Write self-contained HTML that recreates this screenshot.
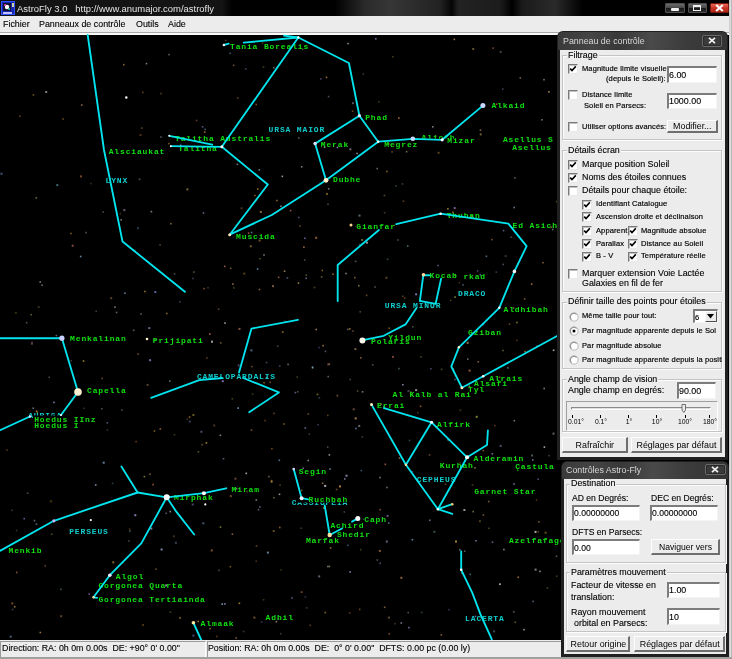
<!DOCTYPE html>
<html><head><meta charset="utf-8"><style>
html,body{margin:0;padding:0;width:732px;height:659px;overflow:hidden;background:#000;}
.t{position:absolute;font-family:"Liberation Sans", sans-serif;line-height:1;white-space:nowrap;will-change:transform;}
.cb{position:absolute;background:#fff;border-top:1px solid #7a7a7a;border-left:1px solid #7a7a7a;border-bottom:1px solid #e8e8e8;border-right:1px solid #e8e8e8;box-shadow:inset 1px 1px 0 #c0c0c0;}
.cb svg{left:-1px!important;top:-1px!important}
</style></head><body>
<div style="position:absolute;left:0.0px;top:0.0px;width:732.0px;height:16.0px;background:linear-gradient(90deg,#131313 0px,#141414 222px,#000 232px,#000 335px,#2a2a2a 365px,#363636 390px,#222 440px,#050505 452px,#222 458px,#1c1c1c 500px,#000 512px,#1a1a1a 522px,#2a2a2a 555px,#000 583px,#000 732px);"></div>
<svg style="position:absolute;left:1px;top:1px" width="14" height="14" viewBox="0 0 14 14"><rect x="0.5" y="0.5" width="13" height="13" fill="#1828b0" stroke="#3050ff"/><rect x="2" y="2" width="8" height="8" fill="#101030"/><circle cx="6" cy="6" r="2.2" fill="#ffffff"/><circle cx="4" cy="4" r="1" fill="#ff40c0"/><circle cx="8" cy="8" r="1" fill="#40e0c0"/><rect x="11" y="2" width="2" height="4" fill="#d0d0a0"/><rect x="2" y="11" width="9" height="2" fill="#c0c0ff"/></svg>
<div class="t" style="left:17.0px;top:3.59px;font-size:9.46px;color:#e4e4e4;">AstroFly 3.0&nbsp;&nbsp; http://www.anumajor.com/astrofly</div>
<div style="position:absolute;left:665.0px;top:2.5px;width:19.5px;height:10.5px;background:linear-gradient(180deg,#6a6a6a 0%,#4a4a4a 45%,#1a1a1a 55%,#2a2a2a 100%);border:1px solid #505050;box-sizing:border-box;border-radius:1px;"></div>
<div style="position:absolute;left:670.8px;top:8.0px;width:8.0px;height:2.5px;background:#f0f0f0;border-radius:1px;"></div>
<div style="position:absolute;left:687.5px;top:2.5px;width:19.5px;height:10.5px;background:linear-gradient(180deg,#6a6a6a 0%,#4a4a4a 45%,#1a1a1a 55%,#2a2a2a 100%);border:1px solid #505050;box-sizing:border-box;border-radius:1px;"></div>
<div style="position:absolute;left:693.2px;top:4.8px;width:8.0px;height:5.8px;border:1.6px solid #f0f0f0;box-sizing:border-box;border-top-width:2.2px;"></div>
<div style="position:absolute;left:709.5px;top:2.5px;width:19.0px;height:10.5px;background:linear-gradient(180deg,#e86a5a 0%,#c83424 50%,#b02818 100%);border:1px solid #7a1a10;box-sizing:border-box;border-radius:1px;"></div>
<svg style="position:absolute;left:714.5px;top:3.8px" width="9" height="8" viewBox="0 0 9 8"><path d="M1.2 1 L7.8 7 M7.8 1 L1.2 7" stroke="#fff" stroke-width="2"/></svg>
<div style="position:absolute;left:0.0px;top:16.0px;width:732.0px;height:17.0px;background:#ececec;"></div>
<div style="position:absolute;left:0.0px;top:32.3px;width:732.0px;height:1.0px;background:#a8a8a8;"></div>
<div style="position:absolute;left:0.0px;top:33.3px;width:732.0px;height:1.7px;background:#fafafa;"></div>
<div class="t" style="left:3.3px;top:19.77px;font-size:8.9px;color:#000;-webkit-text-stroke:0.12px #000;">Fichier</div>
<div class="t" style="left:38.8px;top:19.77px;font-size:8.9px;color:#000;-webkit-text-stroke:0.12px #000;">Panneaux de contrôle</div>
<div class="t" style="left:135.6px;top:19.77px;font-size:8.9px;color:#000;-webkit-text-stroke:0.12px #000;">Outils</div>
<div class="t" style="left:167.8px;top:19.77px;font-size:8.9px;color:#000;-webkit-text-stroke:0.12px #000;">Aide</div>
<svg style="position:absolute;left:0;top:0" width="732" height="659" viewBox="0 0 732 659"><rect x="0" y="35" width="732" height="605" fill="#000"/><g font-family="Liberation Mono" font-size="8" font-weight="bold" letter-spacing="0.85"><rect x="45.2" y="91.0" width="2.0" height="2.0" fill="rgb(249, 249, 249)" opacity="0.50"/><rect x="19.0" y="115.4" width="1.6" height="1.6" fill="rgb(193, 131, 83)" opacity="0.44"/><rect x="81.0" y="104.3" width="1.6" height="1.6" fill="rgb(220, 153, 96)" opacity="0.63"/><rect x="62.3" y="118.2" width="1.6" height="1.6" fill="rgb(174, 137, 70)" opacity="0.57"/><rect x="32.6" y="94.1" width="1.6" height="1.6" fill="rgb(199, 165, 73)" opacity="0.52"/><rect x="145.7" y="62.8" width="1.6" height="1.6" fill="rgb(200, 200, 200)" opacity="0.62"/><rect x="123.0" y="63.9" width="1.6" height="1.6" fill="rgb(183, 150, 61)" opacity="0.68"/><rect x="195.8" y="119.7" width="1.6" height="1.6" fill="rgb(196, 128, 85)" opacity="0.47"/><rect x="142.0" y="91.6" width="1.6" height="1.6" fill="rgb(204, 146, 60)" opacity="0.44"/><rect x="141.0" y="127.3" width="1.6" height="1.6" fill="rgb(182, 125, 58)" opacity="0.51"/><rect x="168.2" y="53.8" width="1.6" height="1.6" fill="rgb(176, 194, 198)" opacity="0.49"/><rect x="139.5" y="134.0" width="2.0" height="2.0" fill="rgb(208, 126, 68)" opacity="0.38"/><rect x="160.2" y="92.7" width="1.6" height="1.6" fill="rgb(188, 138, 83)" opacity="0.42"/><rect x="232.9" y="64.6" width="1.6" height="1.6" fill="rgb(181, 138, 92)" opacity="0.59"/><rect x="236.9" y="97.2" width="1.6" height="1.6" fill="rgb(231, 178, 91)" opacity="0.36"/><rect x="262.7" y="66.1" width="1.6" height="1.6" fill="rgb(201, 171, 67)" opacity="0.37"/><rect x="255.4" y="103.7" width="1.6" height="1.6" fill="rgb(231, 163, 60)" opacity="0.49"/><rect x="203.9" y="131.3" width="1.6" height="1.6" fill="rgb(220, 141, 81)" opacity="0.67"/><rect x="229.3" y="52.5" width="1.6" height="1.6" fill="rgb(134, 153, 204)" opacity="0.52"/><rect x="261.6" y="42.4" width="1.6" height="1.6" fill="rgb(196, 172, 56)" opacity="0.33"/><rect x="224.9" y="39.7" width="1.6" height="1.6" fill="rgb(237, 161, 63)" opacity="0.34"/><rect x="245.0" y="68.1" width="1.6" height="1.6" fill="rgb(163, 182, 250)" opacity="0.36"/><rect x="201.8" y="126.0" width="1.6" height="1.6" fill="rgb(132, 146, 228)" opacity="0.59"/><rect x="273.0" y="66.9" width="1.6" height="1.6" fill="rgb(199, 199, 199)" opacity="0.50"/><rect x="204.4" y="128.6" width="1.6" height="1.6" fill="rgb(138, 195, 248)" opacity="0.45"/><rect x="347.3" y="42.8" width="1.6" height="1.6" fill="rgb(193, 193, 193)" opacity="0.69"/><rect x="362.5" y="73.2" width="1.6" height="1.6" fill="rgb(168, 149, 195)" opacity="0.34"/><rect x="325.7" y="76.6" width="1.6" height="1.6" fill="rgb(228, 153, 84)" opacity="0.68"/><rect x="375.0" y="38.0" width="1.6" height="1.6" fill="rgb(160, 146, 204)" opacity="0.73"/><rect x="378.0" y="101.0" width="1.6" height="1.6" fill="rgb(171, 148, 74)" opacity="0.36"/><rect x="351.8" y="110.4" width="1.6" height="1.6" fill="rgb(226, 156, 70)" opacity="0.45"/><rect x="319.9" y="78.1" width="1.6" height="1.6" fill="rgb(188, 157, 246)" opacity="0.40"/><rect x="392.1" y="56.0" width="1.6" height="1.6" fill="rgb(214, 178, 109)" opacity="0.32"/><rect x="398.0" y="117.2" width="1.6" height="1.6" fill="rgb(230, 142, 68)" opacity="0.67"/><rect x="352.0" y="102.2" width="2.0" height="2.0" fill="rgb(183, 184, 218)" opacity="0.44"/><rect x="327.8" y="95.8" width="1.6" height="1.6" fill="rgb(147, 181, 212)" opacity="0.44"/><rect x="301.9" y="48.6" width="1.6" height="1.6" fill="rgb(173, 174, 108)" opacity="0.42"/><rect x="479.7" y="133.4" width="2.0" height="2.0" fill="rgb(183, 165, 89)" opacity="0.59"/><rect x="495.8" y="103.4" width="1.6" height="1.6" fill="rgb(230, 141, 66)" opacity="0.62"/><rect x="453.5" y="38.6" width="1.6" height="1.6" fill="rgb(214, 159, 99)" opacity="0.73"/><rect x="499.7" y="50.9" width="2.0" height="2.0" fill="rgb(174, 202, 204)" opacity="0.34"/><rect x="472.2" y="48.0" width="2.0" height="2.0" fill="rgb(170, 149, 90)" opacity="0.56"/><rect x="479.7" y="129.4" width="1.6" height="1.6" fill="rgb(196, 131, 101)" opacity="0.69"/><rect x="492.4" y="47.3" width="1.6" height="1.6" fill="rgb(219, 130, 74)" opacity="0.54"/><rect x="432.0" y="126.0" width="1.6" height="1.6" fill="rgb(234, 234, 234)" opacity="0.53"/><rect x="519.5" y="77.1" width="1.6" height="1.6" fill="rgb(173, 138, 106)" opacity="0.69"/><rect x="502.0" y="88.3" width="1.6" height="1.6" fill="rgb(188, 153, 220)" opacity="0.37"/><rect x="541.2" y="119.0" width="1.6" height="1.6" fill="rgb(190, 201, 221)" opacity="0.56"/><rect x="543.2" y="78.9" width="1.6" height="1.6" fill="rgb(183, 191, 225)" opacity="0.59"/><rect x="548.1" y="91.0" width="1.6" height="1.6" fill="rgb(218, 179, 110)" opacity="0.71"/><rect x="85.1" y="231.8" width="1.6" height="1.6" fill="rgb(166, 176, 202)" opacity="0.48"/><rect x="0.5" y="172.7" width="2.0" height="2.0" fill="rgb(132, 178, 248)" opacity="0.48"/><rect x="56.3" y="184.1" width="2.0" height="2.0" fill="rgb(134, 204, 224)" opacity="0.51"/><rect x="80.0" y="175.4" width="2.0" height="2.0" fill="rgb(233, 133, 76)" opacity="0.50"/><rect x="90.1" y="182.7" width="1.6" height="1.6" fill="rgb(194, 151, 94)" opacity="0.31"/><rect x="70.2" y="232.7" width="1.6" height="1.6" fill="rgb(189, 139, 55)" opacity="0.61"/><rect x="35.5" y="197.0" width="1.6" height="1.6" fill="rgb(185, 179, 87)" opacity="0.58"/><rect x="170.1" y="222.9" width="1.6" height="1.6" fill="rgb(222, 177, 88)" opacity="0.58"/><rect x="186.4" y="188.4" width="2.0" height="2.0" fill="rgb(197, 179, 89)" opacity="0.58"/><rect x="123.3" y="209.1" width="2.0" height="2.0" fill="rgb(187, 156, 210)" opacity="0.57"/><rect x="119.5" y="212.8" width="1.6" height="1.6" fill="rgb(182, 133, 70)" opacity="0.36"/><rect x="138.8" y="178.5" width="1.6" height="1.6" fill="rgb(206, 206, 206)" opacity="0.39"/><rect x="179.9" y="144.6" width="1.6" height="1.6" fill="rgb(152, 203, 242)" opacity="0.74"/><rect x="150.6" y="210.8" width="1.6" height="1.6" fill="rgb(173, 198, 202)" opacity="0.66"/><rect x="102.4" y="211.2" width="1.6" height="1.6" fill="rgb(187, 181, 220)" opacity="0.37"/><rect x="120.4" y="219.0" width="1.6" height="1.6" fill="rgb(202, 202, 202)" opacity="0.56"/><rect x="168.1" y="142.8" width="1.6" height="1.6" fill="rgb(220, 154, 82)" opacity="0.53"/><rect x="160.1" y="136.3" width="1.6" height="1.6" fill="rgb(184, 157, 201)" opacity="0.48"/><rect x="137.0" y="227.2" width="2.0" height="2.0" fill="rgb(136, 177, 240)" opacity="0.31"/><rect x="280.2" y="205.5" width="1.6" height="1.6" fill="rgb(241, 241, 241)" opacity="0.56"/><rect x="258.5" y="169.1" width="1.6" height="1.6" fill="rgb(147, 203, 197)" opacity="0.63"/><rect x="281.5" y="175.6" width="1.6" height="1.6" fill="rgb(237, 237, 237)" opacity="0.65"/><rect x="240.6" y="207.3" width="2.0" height="2.0" fill="rgb(213, 144, 85)" opacity="0.35"/><rect x="299.1" y="225.3" width="1.6" height="1.6" fill="rgb(204, 167, 74)" opacity="0.45"/><rect x="257.0" y="188.3" width="1.6" height="1.6" fill="rgb(233, 166, 68)" opacity="0.62"/><rect x="298.0" y="137.3" width="1.6" height="1.6" fill="rgb(177, 160, 206)" opacity="0.50"/><rect x="276.1" y="199.8" width="1.6" height="1.6" fill="rgb(203, 141, 72)" opacity="0.71"/><rect x="250.8" y="231.7" width="1.6" height="1.6" fill="rgb(136, 185, 218)" opacity="0.66"/><rect x="259.8" y="210.9" width="2.0" height="2.0" fill="rgb(190, 149, 85)" opacity="0.74"/><rect x="254.2" y="194.7" width="1.6" height="1.6" fill="rgb(233, 151, 73)" opacity="0.54"/><rect x="236.6" y="163.6" width="1.6" height="1.6" fill="rgb(165, 204, 208)" opacity="0.60"/><rect x="202.7" y="212.2" width="1.6" height="1.6" fill="rgb(170, 155, 216)" opacity="0.64"/><rect x="289.8" y="209.8" width="1.6" height="1.6" fill="rgb(210, 129, 106)" opacity="0.71"/><rect x="247.8" y="232.3" width="1.6" height="1.6" fill="rgb(236, 131, 106)" opacity="0.63"/><rect x="297.9" y="216.7" width="1.6" height="1.6" fill="rgb(137, 148, 229)" opacity="0.49"/><rect x="386.1" y="170.7" width="1.6" height="1.6" fill="rgb(216, 153, 63)" opacity="0.60"/><rect x="326.2" y="193.2" width="1.6" height="1.6" fill="rgb(237, 177, 63)" opacity="0.73"/><rect x="323.8" y="146.4" width="1.6" height="1.6" fill="rgb(254, 254, 254)" opacity="0.58"/><rect x="327.2" y="203.5" width="1.6" height="1.6" fill="rgb(167, 157, 230)" opacity="0.43"/><rect x="395.2" y="185.2" width="1.6" height="1.6" fill="rgb(142, 201, 233)" opacity="0.32"/><rect x="327.1" y="177.5" width="1.6" height="1.6" fill="rgb(136, 159, 224)" opacity="0.43"/><rect x="391.3" y="151.1" width="1.6" height="1.6" fill="rgb(217, 155, 85)" opacity="0.46"/><rect x="349.4" y="148.3" width="2.0" height="2.0" fill="rgb(205, 205, 205)" opacity="0.50"/><rect x="383.8" y="211.9" width="1.6" height="1.6" fill="rgb(203, 149, 106)" opacity="0.37"/><rect x="383.6" y="194.7" width="1.6" height="1.6" fill="rgb(193, 152, 96)" opacity="0.47"/><rect x="387.5" y="142.9" width="2.0" height="2.0" fill="rgb(232, 177, 98)" opacity="0.51"/><rect x="300.9" y="166.0" width="1.6" height="1.6" fill="rgb(200, 200, 200)" opacity="0.61"/><rect x="376.4" y="167.8" width="1.6" height="1.6" fill="rgb(218, 218, 218)" opacity="0.46"/><rect x="336.6" y="146.7" width="1.6" height="1.6" fill="rgb(166, 183, 248)" opacity="0.71"/><rect x="327.9" y="188.0" width="1.6" height="1.6" fill="rgb(248, 248, 248)" opacity="0.44"/><rect x="393.5" y="224.5" width="1.6" height="1.6" fill="rgb(216, 178, 78)" opacity="0.31"/><rect x="358.5" y="214.6" width="2.0" height="2.0" fill="rgb(153, 196, 214)" opacity="0.54"/><rect x="356.3" y="152.7" width="1.6" height="1.6" fill="rgb(186, 199, 208)" opacity="0.67"/><rect x="405.8" y="150.9" width="1.6" height="1.6" fill="rgb(172, 166, 108)" opacity="0.66"/><rect x="454.7" y="213.8" width="1.6" height="1.6" fill="rgb(180, 142, 102)" opacity="0.35"/><rect x="402.6" y="200.4" width="1.6" height="1.6" fill="rgb(224, 140, 100)" opacity="0.40"/><rect x="452.2" y="211.5" width="1.6" height="1.6" fill="rgb(213, 176, 76)" opacity="0.60"/><rect x="453.7" y="207.1" width="2.0" height="2.0" fill="rgb(188, 147, 216)" opacity="0.64"/><rect x="434.9" y="135.4" width="1.6" height="1.6" fill="rgb(181, 154, 89)" opacity="0.59"/><rect x="471.0" y="215.2" width="2.0" height="2.0" fill="rgb(223, 134, 70)" opacity="0.63"/><rect x="437.6" y="151.8" width="2.0" height="2.0" fill="rgb(224, 158, 73)" opacity="0.42"/><rect x="447.1" y="208.1" width="1.6" height="1.6" fill="rgb(189, 174, 66)" opacity="0.71"/><rect x="401.7" y="183.1" width="1.6" height="1.6" fill="rgb(150, 151, 202)" opacity="0.38"/><rect x="513.4" y="206.7" width="1.6" height="1.6" fill="rgb(144, 173, 201)" opacity="0.70"/><rect x="551.9" y="228.7" width="1.6" height="1.6" fill="rgb(190, 197, 225)" opacity="0.52"/><rect x="550.6" y="226.4" width="1.6" height="1.6" fill="rgb(240, 174, 60)" opacity="0.52"/><rect x="502.8" y="229.8" width="1.6" height="1.6" fill="rgb(154, 178, 240)" opacity="0.53"/><rect x="556.4" y="200.8" width="1.6" height="1.6" fill="rgb(171, 180, 85)" opacity="0.71"/><rect x="514.1" y="177.1" width="1.6" height="1.6" fill="rgb(243, 243, 243)" opacity="0.37"/><rect x="25.9" y="321.9" width="1.6" height="1.6" fill="rgb(170, 192, 229)" opacity="0.42"/><rect x="15.1" y="312.0" width="1.6" height="1.6" fill="rgb(189, 177, 63)" opacity="0.34"/><rect x="71.7" y="244.7" width="2.0" height="2.0" fill="rgb(229, 130, 102)" opacity="0.56"/><rect x="30.4" y="313.9" width="1.6" height="1.6" fill="rgb(181, 175, 107)" opacity="0.50"/><rect x="41.3" y="284.4" width="1.6" height="1.6" fill="rgb(229, 229, 229)" opacity="0.44"/><rect x="55.6" y="334.7" width="1.6" height="1.6" fill="rgb(134, 168, 194)" opacity="0.61"/><rect x="39.4" y="281.2" width="1.6" height="1.6" fill="rgb(205, 205, 205)" opacity="0.59"/><rect x="37.7" y="306.0" width="2.0" height="2.0" fill="rgb(184, 154, 104)" opacity="0.30"/><rect x="79.9" y="255.7" width="1.6" height="1.6" fill="rgb(148, 185, 214)" opacity="0.72"/><rect x="95.4" y="310.5" width="1.6" height="1.6" fill="rgb(135, 161, 202)" opacity="0.39"/><rect x="132.9" y="329.5" width="1.6" height="1.6" fill="rgb(176, 185, 211)" opacity="0.50"/><rect x="110.2" y="297.2" width="2.0" height="2.0" fill="rgb(192, 136, 67)" opacity="0.48"/><rect x="159.3" y="244.0" width="1.6" height="1.6" fill="rgb(190, 132, 82)" opacity="0.48"/><rect x="192.1" y="277.7" width="1.6" height="1.6" fill="rgb(171, 158, 239)" opacity="0.37"/><rect x="148.3" y="327.1" width="2.0" height="2.0" fill="rgb(176, 170, 229)" opacity="0.61"/><rect x="179.0" y="301.0" width="1.6" height="1.6" fill="rgb(131, 161, 211)" opacity="0.38"/><rect x="144.1" y="290.7" width="1.6" height="1.6" fill="rgb(212, 175, 73)" opacity="0.67"/><rect x="115.8" y="311.7" width="1.6" height="1.6" fill="rgb(219, 219, 219)" opacity="0.46"/><rect x="114.2" y="306.3" width="1.6" height="1.6" fill="rgb(215, 215, 215)" opacity="0.56"/><rect x="165.9" y="312.7" width="1.6" height="1.6" fill="rgb(231, 161, 81)" opacity="0.61"/><rect x="192.9" y="271.1" width="2.0" height="2.0" fill="rgb(185, 153, 101)" opacity="0.36"/><rect x="154.3" y="291.1" width="2.0" height="2.0" fill="rgb(146, 155, 248)" opacity="0.64"/><rect x="133.5" y="249.6" width="2.0" height="2.0" fill="rgb(190, 190, 190)" opacity="0.43"/><rect x="124.1" y="292.4" width="1.6" height="1.6" fill="rgb(141, 183, 225)" opacity="0.67"/><rect x="140.3" y="313.3" width="1.6" height="1.6" fill="rgb(207, 207, 207)" opacity="0.44"/><rect x="173.8" y="273.2" width="1.6" height="1.6" fill="rgb(181, 193, 191)" opacity="0.37"/><rect x="203.3" y="287.8" width="1.6" height="1.6" fill="rgb(221, 136, 76)" opacity="0.53"/><rect x="256.8" y="268.2" width="1.6" height="1.6" fill="rgb(132, 191, 232)" opacity="0.65"/><rect x="249.8" y="245.3" width="2.0" height="2.0" fill="rgb(222, 173, 73)" opacity="0.52"/><rect x="283.8" y="320.5" width="2.0" height="2.0" fill="rgb(225, 132, 91)" opacity="0.35"/><rect x="233.0" y="287.1" width="1.6" height="1.6" fill="rgb(173, 145, 58)" opacity="0.43"/><rect x="243.3" y="272.6" width="2.0" height="2.0" fill="rgb(209, 162, 59)" opacity="0.41"/><rect x="224.2" y="322.3" width="1.6" height="1.6" fill="rgb(250, 250, 250)" opacity="0.61"/><rect x="223.9" y="265.6" width="1.6" height="1.6" fill="rgb(200, 129, 101)" opacity="0.73"/><rect x="286.6" y="277.1" width="1.6" height="1.6" fill="rgb(144, 186, 237)" opacity="0.49"/><rect x="207.2" y="287.0" width="1.6" height="1.6" fill="rgb(238, 161, 84)" opacity="0.30"/><rect x="229.9" y="267.5" width="1.6" height="1.6" fill="rgb(227, 177, 88)" opacity="0.48"/><rect x="258.6" y="239.6" width="2.0" height="2.0" fill="rgb(210, 144, 75)" opacity="0.52"/><rect x="297.7" y="282.3" width="1.6" height="1.6" fill="rgb(207, 179, 99)" opacity="0.70"/><rect x="283.8" y="270.4" width="1.6" height="1.6" fill="rgb(192, 165, 99)" opacity="0.75"/><rect x="263.2" y="254.2" width="1.6" height="1.6" fill="rgb(196, 196, 196)" opacity="0.59"/><rect x="281.8" y="331.1" width="2.0" height="2.0" fill="rgb(223, 170, 63)" opacity="0.45"/><rect x="277.9" y="276.5" width="1.6" height="1.6" fill="rgb(209, 132, 100)" opacity="0.61"/><rect x="272.0" y="285.1" width="2.0" height="2.0" fill="rgb(204, 148, 106)" opacity="0.60"/><rect x="259.0" y="257.9" width="1.6" height="1.6" fill="rgb(193, 167, 69)" opacity="0.42"/><rect x="209.0" y="333.3" width="1.6" height="1.6" fill="rgb(237, 129, 88)" opacity="0.71"/><rect x="258.7" y="288.7" width="1.6" height="1.6" fill="rgb(181, 135, 73)" opacity="0.74"/><rect x="217.9" y="308.4" width="1.6" height="1.6" fill="rgb(189, 127, 94)" opacity="0.51"/><rect x="238.5" y="327.9" width="2.0" height="2.0" fill="rgb(193, 129, 90)" opacity="0.65"/><rect x="232.1" y="283.3" width="1.6" height="1.6" fill="rgb(207, 157, 107)" opacity="0.68"/><rect x="352.1" y="330.2" width="1.6" height="1.6" fill="rgb(191, 132, 93)" opacity="0.50"/><rect x="354.8" y="260.6" width="1.6" height="1.6" fill="rgb(176, 160, 206)" opacity="0.52"/><rect x="358.0" y="284.9" width="1.6" height="1.6" fill="rgb(176, 161, 83)" opacity="0.69"/><rect x="315.2" y="236.8" width="2.0" height="2.0" fill="rgb(225, 157, 83)" opacity="0.63"/><rect x="303.1" y="246.4" width="1.6" height="1.6" fill="rgb(239, 162, 105)" opacity="0.62"/><rect x="305.4" y="277.5" width="1.6" height="1.6" fill="rgb(182, 184, 237)" opacity="0.54"/><rect x="358.9" y="243.8" width="1.6" height="1.6" fill="rgb(140, 169, 206)" opacity="0.41"/><rect x="365.9" y="294.6" width="1.6" height="1.6" fill="rgb(210, 151, 84)" opacity="0.46"/><rect x="397.1" y="239.2" width="1.6" height="1.6" fill="rgb(187, 134, 102)" opacity="0.50"/><rect x="303.9" y="259.1" width="1.6" height="1.6" fill="rgb(208, 208, 208)" opacity="0.34"/><rect x="347.2" y="328.6" width="1.6" height="1.6" fill="rgb(219, 219, 219)" opacity="0.43"/><rect x="385.5" y="276.8" width="2.0" height="2.0" fill="rgb(199, 148, 74)" opacity="0.45"/><rect x="361.1" y="239.0" width="2.0" height="2.0" fill="rgb(177, 172, 76)" opacity="0.56"/><rect x="388.4" y="327.4" width="1.6" height="1.6" fill="rgb(220, 178, 68)" opacity="0.47"/><rect x="321.5" y="269.7" width="1.6" height="1.6" fill="rgb(240, 176, 65)" opacity="0.52"/><rect x="359.4" y="311.0" width="1.6" height="1.6" fill="rgb(232, 165, 98)" opacity="0.38"/><rect x="354.0" y="276.9" width="1.6" height="1.6" fill="rgb(205, 148, 72)" opacity="0.58"/><rect x="374.2" y="286.2" width="1.6" height="1.6" fill="rgb(171, 190, 203)" opacity="0.42"/><rect x="315.4" y="328.7" width="1.6" height="1.6" fill="rgb(200, 171, 108)" opacity="0.71"/><rect x="332.2" y="273.4" width="1.6" height="1.6" fill="rgb(218, 145, 71)" opacity="0.65"/><rect x="305.5" y="274.4" width="1.6" height="1.6" fill="rgb(175, 137, 64)" opacity="0.53"/><rect x="320.9" y="276.1" width="1.6" height="1.6" fill="rgb(187, 158, 100)" opacity="0.55"/><rect x="345.2" y="272.7" width="1.6" height="1.6" fill="rgb(225, 225, 225)" opacity="0.54"/><rect x="313.7" y="286.7" width="1.6" height="1.6" fill="rgb(183, 143, 78)" opacity="0.46"/><rect x="304.1" y="237.5" width="1.6" height="1.6" fill="rgb(166, 145, 241)" opacity="0.64"/><rect x="366.0" y="241.7" width="2.0" height="2.0" fill="rgb(235, 235, 235)" opacity="0.60"/><rect x="386.8" y="258.5" width="1.6" height="1.6" fill="rgb(135, 196, 217)" opacity="0.35"/><rect x="349.0" y="328.1" width="1.6" height="1.6" fill="rgb(205, 139, 65)" opacity="0.72"/><rect x="476.8" y="270.1" width="1.6" height="1.6" fill="rgb(163, 150, 237)" opacity="0.45"/><rect x="415.1" y="293.3" width="2.0" height="2.0" fill="rgb(165, 164, 234)" opacity="0.71"/><rect x="412.0" y="326.0" width="1.6" height="1.6" fill="rgb(224, 224, 224)" opacity="0.32"/><rect x="458.6" y="281.9" width="1.6" height="1.6" fill="rgb(202, 129, 56)" opacity="0.32"/><rect x="437.3" y="264.7" width="1.6" height="1.6" fill="rgb(186, 156, 231)" opacity="0.51"/><rect x="495.5" y="271.3" width="1.6" height="1.6" fill="rgb(190, 158, 239)" opacity="0.33"/><rect x="454.3" y="296.3" width="1.6" height="1.6" fill="rgb(178, 178, 84)" opacity="0.70"/><rect x="491.0" y="238.8" width="1.6" height="1.6" fill="rgb(234, 142, 74)" opacity="0.52"/><rect x="402.1" y="295.5" width="1.6" height="1.6" fill="rgb(203, 168, 69)" opacity="0.41"/><rect x="454.4" y="274.4" width="1.6" height="1.6" fill="rgb(233, 179, 96)" opacity="0.64"/><rect x="482.3" y="323.4" width="2.0" height="2.0" fill="rgb(180, 166, 206)" opacity="0.46"/><rect x="431.3" y="306.6" width="1.6" height="1.6" fill="rgb(173, 155, 202)" opacity="0.67"/><rect x="462.2" y="284.1" width="1.6" height="1.6" fill="rgb(153, 171, 208)" opacity="0.47"/><rect x="449.8" y="299.6" width="1.6" height="1.6" fill="rgb(192, 157, 102)" opacity="0.36"/><rect x="406.9" y="245.2" width="1.6" height="1.6" fill="rgb(137, 199, 218)" opacity="0.53"/><rect x="404.0" y="297.2" width="1.6" height="1.6" fill="rgb(231, 128, 77)" opacity="0.41"/><rect x="479.6" y="274.2" width="1.6" height="1.6" fill="rgb(146, 168, 235)" opacity="0.61"/><rect x="485.6" y="255.5" width="1.6" height="1.6" fill="rgb(138, 181, 216)" opacity="0.59"/><rect x="542.2" y="261.9" width="1.6" height="1.6" fill="rgb(195, 149, 94)" opacity="0.60"/><rect x="510.5" y="236.4" width="1.6" height="1.6" fill="rgb(190, 195, 249)" opacity="0.36"/><rect x="523.9" y="298.1" width="1.6" height="1.6" fill="rgb(187, 128, 65)" opacity="0.62"/><rect x="502.4" y="263.6" width="1.6" height="1.6" fill="rgb(181, 152, 215)" opacity="0.45"/><rect x="530.9" y="283.3" width="1.6" height="1.6" fill="rgb(209, 153, 106)" opacity="0.69"/><rect x="512.7" y="307.2" width="1.6" height="1.6" fill="rgb(188, 161, 79)" opacity="0.60"/><rect x="516.1" y="321.7" width="1.6" height="1.6" fill="rgb(183, 160, 71)" opacity="0.70"/><rect x="508.7" y="323.4" width="1.6" height="1.6" fill="rgb(188, 142, 95)" opacity="0.48"/><rect x="504.6" y="255.1" width="2.0" height="2.0" fill="rgb(165, 148, 199)" opacity="0.33"/><rect x="30.9" y="342.8" width="2.0" height="2.0" fill="rgb(231, 133, 105)" opacity="0.39"/><rect x="48.4" y="376.5" width="1.6" height="1.6" fill="rgb(155, 180, 193)" opacity="0.40"/><rect x="82.7" y="360.2" width="1.6" height="1.6" fill="rgb(207, 180, 70)" opacity="0.75"/><rect x="83.4" y="407.5" width="1.6" height="1.6" fill="rgb(173, 135, 89)" opacity="0.35"/><rect x="35.9" y="410.4" width="1.6" height="1.6" fill="rgb(235, 154, 55)" opacity="0.70"/><rect x="36.5" y="411.7" width="1.6" height="1.6" fill="rgb(201, 175, 102)" opacity="0.52"/><rect x="53.1" y="401.6" width="1.6" height="1.6" fill="rgb(179, 151, 249)" opacity="0.73"/><rect x="70.5" y="360.0" width="1.6" height="1.6" fill="rgb(193, 193, 193)" opacity="0.30"/><rect x="32.4" y="407.4" width="1.6" height="1.6" fill="rgb(147, 196, 213)" opacity="0.58"/><rect x="31.2" y="341.7" width="1.6" height="1.6" fill="rgb(168, 151, 206)" opacity="0.45"/><rect x="121.1" y="409.3" width="1.6" height="1.6" fill="rgb(173, 158, 201)" opacity="0.46"/><rect x="137.3" y="353.2" width="1.6" height="1.6" fill="rgb(221, 157, 58)" opacity="0.48"/><rect x="153.7" y="430.2" width="1.6" height="1.6" fill="rgb(192, 145, 59)" opacity="0.64"/><rect x="198.8" y="378.0" width="1.6" height="1.6" fill="rgb(218, 218, 218)" opacity="0.52"/><rect x="188.8" y="416.3" width="1.6" height="1.6" fill="rgb(219, 145, 66)" opacity="0.65"/><rect x="101.0" y="408.0" width="1.6" height="1.6" fill="rgb(188, 186, 193)" opacity="0.40"/><rect x="188.8" y="420.6" width="2.0" height="2.0" fill="rgb(162, 181, 249)" opacity="0.35"/><rect x="169.0" y="380.3" width="1.6" height="1.6" fill="rgb(156, 198, 214)" opacity="0.53"/><rect x="154.1" y="339.3" width="1.6" height="1.6" fill="rgb(247, 247, 247)" opacity="0.50"/><rect x="159.5" y="428.2" width="1.6" height="1.6" fill="rgb(229, 146, 71)" opacity="0.63"/><rect x="173.7" y="433.9" width="1.6" height="1.6" fill="rgb(186, 173, 86)" opacity="0.35"/><rect x="192.4" y="414.0" width="2.0" height="2.0" fill="rgb(184, 176, 61)" opacity="0.53"/><rect x="106.5" y="422.0" width="1.6" height="1.6" fill="rgb(146, 178, 241)" opacity="0.46"/><rect x="101.4" y="377.7" width="1.6" height="1.6" fill="rgb(200, 129, 61)" opacity="0.55"/><rect x="149.1" y="359.2" width="2.0" height="2.0" fill="rgb(184, 148, 239)" opacity="0.69"/><rect x="106.6" y="429.2" width="1.6" height="1.6" fill="rgb(141, 151, 211)" opacity="0.32"/><rect x="186.5" y="418.4" width="1.6" height="1.6" fill="rgb(193, 164, 79)" opacity="0.31"/><rect x="146.6" y="383.9" width="2.0" height="2.0" fill="rgb(196, 159, 95)" opacity="0.44"/><rect x="297.0" y="391.0" width="1.6" height="1.6" fill="rgb(238, 238, 238)" opacity="0.31"/><rect x="231.5" y="398.0" width="1.6" height="1.6" fill="rgb(196, 169, 68)" opacity="0.38"/><rect x="269.4" y="381.6" width="1.6" height="1.6" fill="rgb(184, 141, 77)" opacity="0.57"/><rect x="219.6" y="434.5" width="1.6" height="1.6" fill="rgb(177, 190, 213)" opacity="0.69"/><rect x="220.0" y="342.1" width="1.6" height="1.6" fill="rgb(217, 177, 94)" opacity="0.48"/><rect x="250.6" y="429.2" width="1.6" height="1.6" fill="rgb(223, 140, 86)" opacity="0.56"/><rect x="287.3" y="363.6" width="1.6" height="1.6" fill="rgb(248, 248, 248)" opacity="0.40"/><rect x="219.9" y="376.4" width="1.6" height="1.6" fill="rgb(178, 148, 81)" opacity="0.45"/><rect x="265.8" y="361.8" width="1.6" height="1.6" fill="rgb(130, 188, 229)" opacity="0.41"/><rect x="213.2" y="424.5" width="2.0" height="2.0" fill="rgb(223, 142, 76)" opacity="0.35"/><rect x="276.9" y="345.4" width="1.6" height="1.6" fill="rgb(159, 202, 203)" opacity="0.34"/><rect x="237.4" y="407.3" width="1.6" height="1.6" fill="rgb(152, 202, 242)" opacity="0.73"/><rect x="263.3" y="381.9" width="1.6" height="1.6" fill="rgb(229, 157, 75)" opacity="0.52"/><rect x="206.1" y="357.2" width="1.6" height="1.6" fill="rgb(220, 152, 108)" opacity="0.40"/><rect x="211.0" y="340.7" width="2.0" height="2.0" fill="rgb(241, 241, 241)" opacity="0.66"/><rect x="251.8" y="393.4" width="1.6" height="1.6" fill="rgb(188, 157, 80)" opacity="0.34"/><rect x="200.4" y="430.8" width="2.0" height="2.0" fill="rgb(180, 192, 247)" opacity="0.41"/><rect x="273.1" y="412.6" width="1.6" height="1.6" fill="rgb(229, 134, 56)" opacity="0.47"/><rect x="283.2" y="423.2" width="1.6" height="1.6" fill="rgb(222, 159, 90)" opacity="0.54"/><rect x="278.9" y="365.2" width="1.6" height="1.6" fill="rgb(137, 149, 226)" opacity="0.41"/><rect x="251.0" y="365.8" width="1.6" height="1.6" fill="rgb(201, 140, 92)" opacity="0.49"/><rect x="221.8" y="380.2" width="2.0" height="2.0" fill="rgb(159, 153, 244)" opacity="0.70"/><rect x="250.4" y="349.4" width="2.0" height="2.0" fill="rgb(141, 171, 229)" opacity="0.58"/><rect x="296.4" y="376.3" width="1.6" height="1.6" fill="rgb(189, 176, 107)" opacity="0.35"/><rect x="237.7" y="364.4" width="2.0" height="2.0" fill="rgb(155, 152, 221)" opacity="0.44"/><rect x="264.3" y="419.8" width="1.6" height="1.6" fill="rgb(223, 144, 60)" opacity="0.40"/><rect x="265.7" y="376.9" width="2.0" height="2.0" fill="rgb(216, 216, 216)" opacity="0.59"/><rect x="294.6" y="391.8" width="1.6" height="1.6" fill="rgb(187, 151, 215)" opacity="0.58"/><rect x="360.0" y="357.0" width="1.6" height="1.6" fill="rgb(231, 149, 77)" opacity="0.59"/><rect x="311.7" y="366.1" width="1.6" height="1.6" fill="rgb(140, 178, 214)" opacity="0.55"/><rect x="322.3" y="344.9" width="1.6" height="1.6" fill="rgb(210, 148, 85)" opacity="0.73"/><rect x="352.7" y="408.3" width="2.0" height="2.0" fill="rgb(183, 125, 99)" opacity="0.57"/><rect x="336.6" y="394.8" width="1.6" height="1.6" fill="rgb(208, 138, 93)" opacity="0.64"/><rect x="318.4" y="346.8" width="1.6" height="1.6" fill="rgb(152, 148, 244)" opacity="0.34"/><rect x="327.0" y="414.6" width="1.6" height="1.6" fill="rgb(217, 150, 60)" opacity="0.43"/><rect x="308.5" y="433.4" width="1.6" height="1.6" fill="rgb(151, 147, 210)" opacity="0.37"/><rect x="328.5" y="363.2" width="1.6" height="1.6" fill="rgb(252, 252, 252)" opacity="0.32"/><rect x="355.2" y="427.7" width="1.6" height="1.6" fill="rgb(131, 184, 249)" opacity="0.61"/><rect x="354.7" y="417.4" width="2.0" height="2.0" fill="rgb(212, 168, 95)" opacity="0.74"/><rect x="307.5" y="413.1" width="1.6" height="1.6" fill="rgb(187, 149, 103)" opacity="0.50"/><rect x="311.8" y="367.0" width="1.6" height="1.6" fill="rgb(134, 198, 197)" opacity="0.73"/><rect x="383.2" y="406.2" width="1.6" height="1.6" fill="rgb(155, 164, 234)" opacity="0.73"/><rect x="392.2" y="356.1" width="1.6" height="1.6" fill="rgb(238, 133, 108)" opacity="0.73"/><rect x="327.4" y="375.8" width="1.6" height="1.6" fill="rgb(238, 238, 238)" opacity="0.39"/><rect x="349.4" y="378.7" width="1.6" height="1.6" fill="rgb(162, 194, 220)" opacity="0.35"/><rect x="316.7" y="393.6" width="1.6" height="1.6" fill="rgb(214, 177, 65)" opacity="0.59"/><rect x="380.3" y="403.4" width="1.6" height="1.6" fill="rgb(229, 147, 104)" opacity="0.56"/><rect x="398.1" y="367.8" width="1.6" height="1.6" fill="rgb(144, 185, 206)" opacity="0.46"/><rect x="304.5" y="427.2" width="1.6" height="1.6" fill="rgb(146, 169, 205)" opacity="0.62"/><rect x="361.8" y="391.0" width="1.6" height="1.6" fill="rgb(248, 248, 248)" opacity="0.47"/><rect x="318.6" y="397.0" width="1.6" height="1.6" fill="rgb(162, 199, 199)" opacity="0.32"/><rect x="356.8" y="390.2" width="1.6" height="1.6" fill="rgb(189, 153, 103)" opacity="0.46"/><rect x="324.7" y="350.6" width="1.6" height="1.6" fill="rgb(234, 234, 234)" opacity="0.35"/><rect x="358.2" y="424.9" width="2.0" height="2.0" fill="rgb(231, 231, 231)" opacity="0.46"/><rect x="371.9" y="364.1" width="1.6" height="1.6" fill="rgb(223, 223, 223)" opacity="0.35"/><rect x="317.2" y="423.9" width="1.6" height="1.6" fill="rgb(148, 161, 225)" opacity="0.36"/><rect x="327.3" y="363.5" width="2.0" height="2.0" fill="rgb(235, 134, 110)" opacity="0.48"/><rect x="354.4" y="348.1" width="2.0" height="2.0" fill="rgb(190, 159, 103)" opacity="0.60"/><rect x="477.5" y="361.0" width="1.6" height="1.6" fill="rgb(216, 166, 105)" opacity="0.54"/><rect x="468.6" y="369.6" width="2.0" height="2.0" fill="rgb(234, 142, 91)" opacity="0.63"/><rect x="407.5" y="390.0" width="2.0" height="2.0" fill="rgb(189, 187, 237)" opacity="0.33"/><rect x="410.2" y="391.5" width="1.6" height="1.6" fill="rgb(217, 144, 77)" opacity="0.69"/><rect x="466.6" y="341.8" width="2.0" height="2.0" fill="rgb(188, 168, 109)" opacity="0.74"/><rect x="454.2" y="378.7" width="1.6" height="1.6" fill="rgb(135, 178, 234)" opacity="0.46"/><rect x="419.8" y="405.5" width="1.6" height="1.6" fill="rgb(232, 137, 60)" opacity="0.61"/><rect x="494.0" y="424.9" width="1.6" height="1.6" fill="rgb(208, 141, 76)" opacity="0.40"/><rect x="415.1" y="389.1" width="2.0" height="2.0" fill="rgb(209, 209, 209)" opacity="0.69"/><rect x="402.0" y="384.0" width="1.6" height="1.6" fill="rgb(173, 181, 229)" opacity="0.70"/><rect x="417.0" y="411.9" width="1.6" height="1.6" fill="rgb(174, 131, 62)" opacity="0.43"/><rect x="498.7" y="376.4" width="1.6" height="1.6" fill="rgb(193, 169, 93)" opacity="0.53"/><rect x="475.7" y="415.8" width="2.0" height="2.0" fill="rgb(178, 175, 68)" opacity="0.74"/><rect x="440.8" y="368.6" width="1.6" height="1.6" fill="rgb(171, 174, 70)" opacity="0.42"/><rect x="452.6" y="368.5" width="1.6" height="1.6" fill="rgb(159, 186, 205)" opacity="0.72"/><rect x="420.1" y="356.1" width="1.6" height="1.6" fill="rgb(198, 175, 76)" opacity="0.38"/><rect x="461.0" y="394.6" width="1.6" height="1.6" fill="rgb(166, 201, 191)" opacity="0.38"/><rect x="430.1" y="368.0" width="1.6" height="1.6" fill="rgb(173, 147, 240)" opacity="0.41"/><rect x="468.5" y="385.4" width="1.6" height="1.6" fill="rgb(175, 151, 90)" opacity="0.75"/><rect x="435.6" y="426.1" width="1.6" height="1.6" fill="rgb(239, 239, 239)" opacity="0.75"/><rect x="467.0" y="358.3" width="1.6" height="1.6" fill="rgb(216, 216, 216)" opacity="0.47"/><rect x="459.3" y="409.2" width="2.0" height="2.0" fill="rgb(171, 128, 86)" opacity="0.31"/><rect x="524.2" y="350.8" width="1.6" height="1.6" fill="rgb(190, 156, 69)" opacity="0.72"/><rect x="553.1" y="349.2" width="1.6" height="1.6" fill="rgb(190, 147, 202)" opacity="0.41"/><rect x="513.5" y="419.9" width="1.6" height="1.6" fill="rgb(248, 248, 248)" opacity="0.47"/><rect x="552.7" y="349.6" width="1.6" height="1.6" fill="rgb(213, 213, 213)" opacity="0.63"/><rect x="507.0" y="367.1" width="1.6" height="1.6" fill="rgb(147, 178, 223)" opacity="0.54"/><rect x="543.4" y="387.7" width="1.6" height="1.6" fill="rgb(200, 200, 200)" opacity="0.59"/><rect x="552.5" y="432.6" width="2.0" height="2.0" fill="rgb(254, 254, 254)" opacity="0.38"/><rect x="536.4" y="345.5" width="1.6" height="1.6" fill="rgb(228, 147, 93)" opacity="0.75"/><rect x="502.2" y="349.7" width="1.6" height="1.6" fill="rgb(173, 153, 103)" opacity="0.56"/><rect x="516.1" y="339.6" width="1.6" height="1.6" fill="rgb(197, 126, 56)" opacity="0.40"/><rect x="49.9" y="500.3" width="2.0" height="2.0" fill="rgb(193, 146, 55)" opacity="0.37"/><rect x="33.7" y="519.8" width="1.6" height="1.6" fill="rgb(174, 175, 206)" opacity="0.58"/><rect x="35.7" y="523.4" width="1.6" height="1.6" fill="rgb(156, 172, 224)" opacity="0.56"/><rect x="94.9" y="484.2" width="1.6" height="1.6" fill="rgb(169, 199, 247)" opacity="0.70"/><rect x="50.9" y="533.5" width="1.6" height="1.6" fill="rgb(191, 171, 75)" opacity="0.41"/><rect x="15.8" y="529.7" width="1.6" height="1.6" fill="rgb(182, 165, 98)" opacity="0.30"/><rect x="11.2" y="509.5" width="1.6" height="1.6" fill="rgb(171, 169, 233)" opacity="0.30"/><rect x="26.9" y="492.4" width="1.6" height="1.6" fill="rgb(159, 148, 195)" opacity="0.44"/><rect x="6.2" y="449.3" width="1.6" height="1.6" fill="rgb(238, 153, 58)" opacity="0.34"/><rect x="23.4" y="517.9" width="1.6" height="1.6" fill="rgb(146, 157, 247)" opacity="0.58"/><rect x="135.3" y="440.8" width="1.6" height="1.6" fill="rgb(231, 134, 73)" opacity="0.44"/><rect x="150.3" y="527.6" width="2.0" height="2.0" fill="rgb(174, 198, 218)" opacity="0.66"/><rect x="191.7" y="503.5" width="2.0" height="2.0" fill="rgb(175, 162, 241)" opacity="0.43"/><rect x="111.8" y="482.6" width="1.6" height="1.6" fill="rgb(132, 203, 241)" opacity="0.31"/><rect x="134.3" y="514.2" width="2.0" height="2.0" fill="rgb(188, 170, 249)" opacity="0.72"/><rect x="197.6" y="451.0" width="1.6" height="1.6" fill="rgb(206, 180, 79)" opacity="0.44"/><rect x="169.4" y="510.8" width="1.6" height="1.6" fill="rgb(206, 206, 206)" opacity="0.64"/><rect x="143.6" y="475.8" width="1.6" height="1.6" fill="rgb(170, 161, 71)" opacity="0.72"/><rect x="149.2" y="473.4" width="1.6" height="1.6" fill="rgb(172, 135, 86)" opacity="0.66"/><rect x="165.4" y="512.5" width="1.6" height="1.6" fill="rgb(163, 172, 210)" opacity="0.51"/><rect x="102.7" y="461.7" width="2.0" height="2.0" fill="rgb(136, 166, 211)" opacity="0.72"/><rect x="129.1" y="530.2" width="1.6" height="1.6" fill="rgb(159, 194, 193)" opacity="0.45"/><rect x="152.3" y="483.8" width="1.6" height="1.6" fill="rgb(238, 128, 85)" opacity="0.64"/><rect x="128.8" y="528.3" width="1.6" height="1.6" fill="rgb(225, 145, 80)" opacity="0.33"/><rect x="235.5" y="487.7" width="2.0" height="2.0" fill="rgb(243, 243, 243)" opacity="0.40"/><rect x="279.0" y="526.7" width="1.6" height="1.6" fill="rgb(224, 152, 85)" opacity="0.61"/><rect x="255.5" y="499.1" width="1.6" height="1.6" fill="rgb(222, 222, 222)" opacity="0.56"/><rect x="201.2" y="443.7" width="2.0" height="2.0" fill="rgb(177, 164, 64)" opacity="0.38"/><rect x="278.7" y="493.5" width="1.6" height="1.6" fill="rgb(224, 224, 224)" opacity="0.65"/><rect x="270.6" y="480.7" width="2.0" height="2.0" fill="rgb(183, 155, 67)" opacity="0.73"/><rect x="205.6" y="442.1" width="1.6" height="1.6" fill="rgb(226, 180, 63)" opacity="0.75"/><rect x="278.5" y="459.5" width="1.6" height="1.6" fill="rgb(145, 188, 245)" opacity="0.58"/><rect x="271.1" y="447.9" width="1.6" height="1.6" fill="rgb(230, 150, 56)" opacity="0.47"/><rect x="273.0" y="496.9" width="1.6" height="1.6" fill="rgb(201, 179, 102)" opacity="0.52"/><rect x="231.6" y="533.4" width="1.6" height="1.6" fill="rgb(208, 126, 69)" opacity="0.68"/><rect x="257.7" y="508.9" width="1.6" height="1.6" fill="rgb(214, 214, 214)" opacity="0.42"/><rect x="270.8" y="479.8" width="1.6" height="1.6" fill="rgb(225, 138, 83)" opacity="0.50"/><rect x="202.3" y="522.3" width="2.0" height="2.0" fill="rgb(135, 174, 237)" opacity="0.51"/><rect x="245.5" y="472.6" width="1.6" height="1.6" fill="rgb(241, 241, 241)" opacity="0.70"/><rect x="222.7" y="457.9" width="1.6" height="1.6" fill="rgb(168, 186, 232)" opacity="0.50"/><rect x="229.8" y="495.1" width="2.0" height="2.0" fill="rgb(213, 161, 100)" opacity="0.48"/><rect x="234.4" y="477.7" width="2.0" height="2.0" fill="rgb(218, 139, 110)" opacity="0.48"/><rect x="219.7" y="526.3" width="1.6" height="1.6" fill="rgb(176, 177, 68)" opacity="0.68"/><rect x="259.0" y="506.2" width="1.6" height="1.6" fill="rgb(177, 168, 227)" opacity="0.52"/><rect x="268.1" y="475.8" width="1.6" height="1.6" fill="rgb(173, 133, 103)" opacity="0.65"/><rect x="272.7" y="530.0" width="2.0" height="2.0" fill="rgb(213, 158, 86)" opacity="0.45"/><rect x="279.3" y="484.4" width="1.6" height="1.6" fill="rgb(223, 168, 64)" opacity="0.34"/><rect x="246.3" y="490.7" width="1.6" height="1.6" fill="rgb(172, 143, 77)" opacity="0.49"/><rect x="300.9" y="489.6" width="1.6" height="1.6" fill="rgb(216, 178, 68)" opacity="0.47"/><rect x="335.8" y="488.7" width="1.6" height="1.6" fill="rgb(217, 150, 97)" opacity="0.48"/><rect x="362.6" y="518.4" width="1.6" height="1.6" fill="rgb(143, 156, 191)" opacity="0.35"/><rect x="379.4" y="508.9" width="1.6" height="1.6" fill="rgb(232, 128, 99)" opacity="0.56"/><rect x="329.1" y="468.1" width="2.0" height="2.0" fill="rgb(153, 189, 210)" opacity="0.45"/><rect x="321.8" y="482.4" width="1.6" height="1.6" fill="rgb(226, 176, 105)" opacity="0.56"/><rect x="398.7" y="457.3" width="1.6" height="1.6" fill="rgb(210, 134, 96)" opacity="0.73"/><rect x="344.0" y="478.1" width="1.6" height="1.6" fill="rgb(188, 182, 233)" opacity="0.64"/><rect x="360.5" y="469.8" width="1.6" height="1.6" fill="rgb(150, 200, 244)" opacity="0.40"/><rect x="322.9" y="506.9" width="2.0" height="2.0" fill="rgb(178, 174, 108)" opacity="0.61"/><rect x="302.4" y="467.4" width="1.6" height="1.6" fill="rgb(178, 176, 228)" opacity="0.54"/><rect x="379.3" y="476.8" width="1.6" height="1.6" fill="rgb(212, 212, 212)" opacity="0.55"/><rect x="315.3" y="502.9" width="1.6" height="1.6" fill="rgb(206, 139, 90)" opacity="0.31"/><rect x="300.3" y="527.4" width="1.6" height="1.6" fill="rgb(171, 126, 78)" opacity="0.44"/><rect x="326.9" y="446.3" width="1.6" height="1.6" fill="rgb(160, 188, 222)" opacity="0.39"/><rect x="388.0" y="522.3" width="1.6" height="1.6" fill="rgb(158, 189, 235)" opacity="0.53"/><rect x="339.0" y="485.4" width="2.0" height="2.0" fill="rgb(237, 161, 89)" opacity="0.75"/><rect x="384.5" y="463.5" width="1.6" height="1.6" fill="rgb(220, 127, 96)" opacity="0.66"/><rect x="328.6" y="454.1" width="1.6" height="1.6" fill="rgb(249, 249, 249)" opacity="0.61"/><rect x="345.5" y="474.7" width="2.0" height="2.0" fill="rgb(186, 182, 231)" opacity="0.71"/><rect x="307.4" y="459.7" width="1.6" height="1.6" fill="rgb(244, 244, 244)" opacity="0.53"/><rect x="386.2" y="486.7" width="1.6" height="1.6" fill="rgb(199, 199, 199)" opacity="0.54"/><rect x="386.6" y="514.9" width="2.0" height="2.0" fill="rgb(178, 152, 218)" opacity="0.55"/><rect x="343.6" y="511.2" width="1.6" height="1.6" fill="rgb(167, 190, 201)" opacity="0.33"/><rect x="324.2" y="484.9" width="2.0" height="2.0" fill="rgb(233, 233, 233)" opacity="0.75"/><rect x="361.5" y="436.2" width="1.6" height="1.6" fill="rgb(189, 158, 228)" opacity="0.33"/><rect x="433.4" y="530.8" width="2.0" height="2.0" fill="rgb(136, 185, 201)" opacity="0.42"/><rect x="472.4" y="510.8" width="1.6" height="1.6" fill="rgb(174, 171, 106)" opacity="0.62"/><rect x="463.4" y="509.0" width="2.0" height="2.0" fill="rgb(231, 231, 231)" opacity="0.66"/><rect x="474.2" y="467.0" width="1.6" height="1.6" fill="rgb(170, 168, 57)" opacity="0.69"/><rect x="487.9" y="500.7" width="1.6" height="1.6" fill="rgb(193, 151, 86)" opacity="0.59"/><rect x="459.1" y="462.0" width="1.6" height="1.6" fill="rgb(180, 129, 71)" opacity="0.38"/><rect x="429.0" y="519.5" width="1.6" height="1.6" fill="rgb(170, 187, 231)" opacity="0.58"/><rect x="471.7" y="484.3" width="1.6" height="1.6" fill="rgb(232, 162, 79)" opacity="0.35"/><rect x="411.7" y="471.0" width="1.6" height="1.6" fill="rgb(165, 166, 214)" opacity="0.37"/><rect x="491.5" y="453.0" width="1.6" height="1.6" fill="rgb(161, 187, 239)" opacity="0.59"/><rect x="444.8" y="483.4" width="1.6" height="1.6" fill="rgb(239, 180, 57)" opacity="0.36"/><rect x="422.5" y="478.6" width="1.6" height="1.6" fill="rgb(190, 173, 78)" opacity="0.63"/><rect x="482.5" y="449.8" width="1.6" height="1.6" fill="rgb(174, 126, 70)" opacity="0.69"/><rect x="408.7" y="439.7" width="1.6" height="1.6" fill="rgb(168, 203, 241)" opacity="0.32"/><rect x="428.7" y="454.1" width="1.6" height="1.6" fill="rgb(195, 129, 95)" opacity="0.54"/><rect x="482.6" y="514.2" width="1.6" height="1.6" fill="rgb(218, 161, 102)" opacity="0.53"/><rect x="447.4" y="439.0" width="1.6" height="1.6" fill="rgb(142, 196, 211)" opacity="0.72"/><rect x="478.9" y="520.2" width="2.0" height="2.0" fill="rgb(206, 167, 63)" opacity="0.37"/><rect x="488.1" y="527.5" width="1.6" height="1.6" fill="rgb(175, 141, 73)" opacity="0.43"/><rect x="499.7" y="444.9" width="2.0" height="2.0" fill="rgb(171, 156, 230)" opacity="0.48"/><rect x="543.6" y="446.3" width="1.6" height="1.6" fill="rgb(243, 243, 243)" opacity="0.69"/><rect x="534.5" y="530.9" width="2.0" height="2.0" fill="rgb(225, 225, 225)" opacity="0.75"/><rect x="537.4" y="531.0" width="1.6" height="1.6" fill="rgb(221, 156, 91)" opacity="0.34"/><rect x="537.4" y="478.4" width="1.6" height="1.6" fill="rgb(143, 165, 228)" opacity="0.48"/><rect x="538.1" y="521.2" width="1.6" height="1.6" fill="rgb(193, 148, 87)" opacity="0.61"/><rect x="548.4" y="454.9" width="1.6" height="1.6" fill="rgb(151, 191, 190)" opacity="0.35"/><rect x="535.8" y="499.1" width="1.6" height="1.6" fill="rgb(234, 165, 56)" opacity="0.33"/><rect x="513.3" y="483.2" width="1.6" height="1.6" fill="rgb(184, 175, 249)" opacity="0.60"/><rect x="532.0" y="459.1" width="1.6" height="1.6" fill="rgb(180, 174, 224)" opacity="0.61"/><rect x="544.6" y="531.7" width="2.0" height="2.0" fill="rgb(190, 168, 57)" opacity="0.49"/><rect x="531.1" y="454.5" width="2.0" height="2.0" fill="rgb(152, 186, 193)" opacity="0.47"/><rect x="13.9" y="606.0" width="1.6" height="1.6" fill="rgb(202, 160, 84)" opacity="0.69"/><rect x="11.3" y="602.4" width="2.0" height="2.0" fill="rgb(199, 131, 56)" opacity="0.56"/><rect x="16.0" y="571.6" width="1.6" height="1.6" fill="rgb(214, 132, 78)" opacity="0.60"/><rect x="88.4" y="593.2" width="1.6" height="1.6" fill="rgb(185, 148, 233)" opacity="0.54"/><rect x="44.4" y="565.0" width="1.6" height="1.6" fill="rgb(197, 125, 83)" opacity="0.51"/><rect x="60.2" y="588.5" width="1.6" height="1.6" fill="rgb(133, 179, 198)" opacity="0.46"/><rect x="9.7" y="635.7" width="2.0" height="2.0" fill="rgb(134, 174, 228)" opacity="0.53"/><rect x="39.5" y="631.7" width="1.6" height="1.6" fill="rgb(220, 168, 85)" opacity="0.68"/><rect x="11.8" y="608.7" width="1.6" height="1.6" fill="rgb(173, 154, 218)" opacity="0.37"/><rect x="60.2" y="615.2" width="2.0" height="2.0" fill="rgb(207, 144, 78)" opacity="0.47"/><rect x="172.9" y="535.3" width="2.0" height="2.0" fill="rgb(188, 133, 65)" opacity="0.36"/><rect x="174.9" y="541.8" width="2.0" height="2.0" fill="rgb(143, 166, 218)" opacity="0.38"/><rect x="128.1" y="540.1" width="1.6" height="1.6" fill="rgb(157, 194, 194)" opacity="0.35"/><rect x="165.2" y="584.4" width="2.0" height="2.0" fill="rgb(216, 216, 216)" opacity="0.67"/><rect x="117.8" y="586.9" width="1.6" height="1.6" fill="rgb(223, 138, 104)" opacity="0.59"/><rect x="192.4" y="634.6" width="2.0" height="2.0" fill="rgb(150, 148, 236)" opacity="0.49"/><rect x="197.4" y="620.7" width="1.6" height="1.6" fill="rgb(239, 157, 89)" opacity="0.69"/><rect x="155.2" y="568.3" width="1.6" height="1.6" fill="rgb(203, 173, 70)" opacity="0.45"/><rect x="169.6" y="611.4" width="1.6" height="1.6" fill="rgb(185, 157, 61)" opacity="0.40"/><rect x="142.1" y="623.9" width="2.0" height="2.0" fill="rgb(195, 148, 59)" opacity="0.38"/><rect x="160.6" y="548.5" width="2.0" height="2.0" fill="rgb(168, 178, 229)" opacity="0.74"/><rect x="179.3" y="617.1" width="1.6" height="1.6" fill="rgb(200, 166, 78)" opacity="0.71"/><rect x="112.3" y="561.3" width="2.0" height="2.0" fill="rgb(204, 176, 99)" opacity="0.60"/><rect x="238.6" y="602.5" width="1.6" height="1.6" fill="rgb(210, 161, 61)" opacity="0.74"/><rect x="291.1" y="597.1" width="1.6" height="1.6" fill="rgb(174, 154, 230)" opacity="0.54"/><rect x="253.4" y="616.6" width="2.0" height="2.0" fill="rgb(182, 129, 77)" opacity="0.61"/><rect x="280.0" y="632.9" width="1.6" height="1.6" fill="rgb(149, 191, 220)" opacity="0.31"/><rect x="280.3" y="569.2" width="1.6" height="1.6" fill="rgb(185, 151, 59)" opacity="0.34"/><rect x="255.4" y="560.4" width="1.6" height="1.6" fill="rgb(232, 145, 75)" opacity="0.32"/><rect x="235.4" y="637.1" width="1.6" height="1.6" fill="rgb(185, 133, 76)" opacity="0.66"/><rect x="255.7" y="545.2" width="1.6" height="1.6" fill="rgb(222, 164, 65)" opacity="0.43"/><rect x="229.6" y="565.9" width="1.6" height="1.6" fill="rgb(228, 166, 57)" opacity="0.51"/><rect x="266.9" y="551.6" width="2.0" height="2.0" fill="rgb(156, 196, 222)" opacity="0.64"/><rect x="260.8" y="621.3" width="1.6" height="1.6" fill="rgb(158, 150, 242)" opacity="0.37"/><rect x="216.0" y="635.7" width="1.6" height="1.6" fill="rgb(226, 133, 84)" opacity="0.38"/><rect x="262.8" y="599.0" width="1.6" height="1.6" fill="rgb(212, 176, 81)" opacity="0.30"/><rect x="209.3" y="627.8" width="1.6" height="1.6" fill="rgb(204, 166, 104)" opacity="0.60"/><rect x="218.2" y="569.5" width="1.6" height="1.6" fill="rgb(157, 174, 192)" opacity="0.42"/><rect x="210.7" y="549.4" width="2.0" height="2.0" fill="rgb(238, 159, 92)" opacity="0.52"/><rect x="221.4" y="603.4" width="1.6" height="1.6" fill="rgb(160, 197, 232)" opacity="0.74"/><rect x="275.6" y="620.9" width="1.6" height="1.6" fill="rgb(216, 216, 216)" opacity="0.59"/><rect x="242.8" y="630.7" width="1.6" height="1.6" fill="rgb(170, 155, 108)" opacity="0.36"/><rect x="224.1" y="603.1" width="1.6" height="1.6" fill="rgb(179, 167, 217)" opacity="0.73"/><rect x="277.7" y="618.4" width="1.6" height="1.6" fill="rgb(190, 190, 246)" opacity="0.45"/><rect x="314.5" y="539.7" width="1.6" height="1.6" fill="rgb(215, 127, 90)" opacity="0.34"/><rect x="394.2" y="622.9" width="1.6" height="1.6" fill="rgb(210, 139, 78)" opacity="0.35"/><rect x="305.9" y="607.1" width="1.6" height="1.6" fill="rgb(151, 156, 201)" opacity="0.35"/><rect x="376.5" y="559.2" width="1.6" height="1.6" fill="rgb(180, 205, 195)" opacity="0.39"/><rect x="347.0" y="544.5" width="1.6" height="1.6" fill="rgb(132, 173, 221)" opacity="0.46"/><rect x="379.4" y="562.5" width="1.6" height="1.6" fill="rgb(188, 164, 228)" opacity="0.45"/><rect x="309.5" y="624.5" width="1.6" height="1.6" fill="rgb(198, 132, 84)" opacity="0.44"/><rect x="383.9" y="606.5" width="1.6" height="1.6" fill="rgb(223, 180, 106)" opacity="0.53"/><rect x="328.6" y="565.7" width="1.6" height="1.6" fill="rgb(179, 163, 109)" opacity="0.67"/><rect x="324.5" y="611.8" width="1.6" height="1.6" fill="rgb(199, 156, 59)" opacity="0.65"/><rect x="327.0" y="565.7" width="1.6" height="1.6" fill="rgb(227, 227, 227)" opacity="0.47"/><rect x="304.5" y="596.1" width="1.6" height="1.6" fill="rgb(135, 162, 229)" opacity="0.32"/><rect x="329.8" y="547.1" width="1.6" height="1.6" fill="rgb(231, 163, 56)" opacity="0.63"/><rect x="300.8" y="591.3" width="1.6" height="1.6" fill="rgb(223, 131, 80)" opacity="0.65"/><rect x="349.3" y="571.1" width="1.6" height="1.6" fill="rgb(162, 169, 240)" opacity="0.74"/><rect x="378.8" y="549.9" width="2.0" height="2.0" fill="rgb(238, 162, 108)" opacity="0.54"/><rect x="385.8" y="540.5" width="2.0" height="2.0" fill="rgb(169, 179, 228)" opacity="0.55"/><rect x="359.9" y="548.9" width="1.6" height="1.6" fill="rgb(191, 161, 72)" opacity="0.36"/><rect x="348.9" y="612.2" width="1.6" height="1.6" fill="rgb(225, 125, 76)" opacity="0.40"/><rect x="387.9" y="616.6" width="2.0" height="2.0" fill="rgb(180, 151, 100)" opacity="0.51"/><rect x="358.9" y="608.6" width="1.6" height="1.6" fill="rgb(226, 155, 70)" opacity="0.45"/><rect x="388.5" y="633.1" width="1.6" height="1.6" fill="rgb(227, 133, 72)" opacity="0.55"/><rect x="318.2" y="575.4" width="2.0" height="2.0" fill="rgb(163, 172, 198)" opacity="0.57"/><rect x="493.1" y="630.3" width="2.0" height="2.0" fill="rgb(144, 190, 205)" opacity="0.39"/><rect x="448.2" y="608.9" width="1.6" height="1.6" fill="rgb(148, 164, 231)" opacity="0.31"/><rect x="420.9" y="611.7" width="1.6" height="1.6" fill="rgb(132, 187, 205)" opacity="0.34"/><rect x="408.1" y="626.8" width="1.6" height="1.6" fill="rgb(158, 162, 248)" opacity="0.62"/><rect x="474.7" y="615.6" width="1.6" height="1.6" fill="rgb(147, 178, 228)" opacity="0.60"/><rect x="463.9" y="550.4" width="1.6" height="1.6" fill="rgb(217, 217, 217)" opacity="0.38"/><rect x="411.6" y="538.9" width="1.6" height="1.6" fill="rgb(156, 199, 231)" opacity="0.67"/><rect x="407.4" y="611.8" width="1.6" height="1.6" fill="rgb(183, 148, 192)" opacity="0.48"/><rect x="475.1" y="540.0" width="1.6" height="1.6" fill="rgb(173, 173, 244)" opacity="0.60"/><rect x="469.4" y="573.6" width="1.6" height="1.6" fill="rgb(134, 193, 247)" opacity="0.47"/><rect x="440.5" y="634.0" width="1.6" height="1.6" fill="rgb(226, 168, 107)" opacity="0.55"/><rect x="400.4" y="576.8" width="2.0" height="2.0" fill="rgb(199, 133, 69)" opacity="0.74"/><rect x="459.1" y="549.1" width="1.6" height="1.6" fill="rgb(172, 200, 235)" opacity="0.57"/><rect x="461.4" y="572.2" width="2.0" height="2.0" fill="rgb(179, 147, 97)" opacity="0.75"/><rect x="455.0" y="540.5" width="2.0" height="2.0" fill="rgb(232, 176, 59)" opacity="0.73"/><rect x="499.0" y="583.3" width="1.6" height="1.6" fill="rgb(191, 180, 108)" opacity="0.58"/><rect x="400.5" y="622.2" width="1.6" height="1.6" fill="rgb(161, 182, 202)" opacity="0.68"/><rect x="499.1" y="583.5" width="1.6" height="1.6" fill="rgb(240, 240, 240)" opacity="0.62"/><rect x="491.7" y="541.4" width="1.6" height="1.6" fill="rgb(150, 162, 194)" opacity="0.61"/><rect x="517.4" y="576.5" width="1.6" height="1.6" fill="rgb(235, 152, 77)" opacity="0.66"/><rect x="555.7" y="555.5" width="1.6" height="1.6" fill="rgb(144, 165, 190)" opacity="0.54"/><rect x="539.2" y="570.6" width="1.6" height="1.6" fill="rgb(224, 224, 224)" opacity="0.61"/><rect x="523.3" y="628.9" width="1.6" height="1.6" fill="rgb(207, 207, 207)" opacity="0.69"/><rect x="503.1" y="548.7" width="1.6" height="1.6" fill="rgb(183, 198, 224)" opacity="0.65"/><rect x="532.3" y="600.6" width="1.6" height="1.6" fill="rgb(138, 169, 210)" opacity="0.53"/><rect x="555.9" y="575.4" width="1.6" height="1.6" fill="rgb(172, 141, 61)" opacity="0.40"/><rect x="534.6" y="568.6" width="2.0" height="2.0" fill="rgb(187, 180, 203)" opacity="0.70"/><rect x="514.4" y="621.5" width="1.6" height="1.6" fill="rgb(179, 155, 61)" opacity="0.53"/><rect x="512.8" y="610.8" width="2.0" height="2.0" fill="rgb(182, 195, 198)" opacity="0.33"/><rect x="546.7" y="587.1" width="1.6" height="1.6" fill="rgb(173, 153, 99)" opacity="0.42"/>
<text x="28.2" y="418.2" fill="#10cccc">AURIGA</text>
<text x="291.7" y="504.7" fill="#10cccc">CASSIOPEIA</text>
<text x="421.5" y="140.4" fill="#10e010">Alioth</text>
<rect x="296.5" y="496.2" width="51.0" height="6.4" fill="#000"/>
<rect x="33.5" y="415.4" width="66.5" height="13.1" fill="#000"/>
<rect x="421" y="138.6" width="33.0" height="2.9" fill="#000"/>
<text x="230" y="48.6" fill="#10e010">Tania Borealis</text>
<text x="175" y="140.7" fill="#10e010">Talitha Australis</text>
<text x="178.2" y="150.7" fill="#10e010">Talitha</text>
<text x="108.7" y="153.8" fill="#10e010">Alsciaukat</text>
<text x="105.5" y="182.8" fill="#10cccc">LYNX</text>
<text x="268.6" y="131.9" fill="#10cccc">URSA MAIOR</text>
<text x="365.2" y="119.6" fill="#10e010">Phad</text>
<text x="320.8" y="146.8" fill="#10e010">Merak</text>
<text x="333" y="181.8" fill="#10e010">Dubhe</text>
<text x="384.3" y="147.3" fill="#10e010">Megrez</text>
<text x="447.3" y="143.4" fill="#10e010">Mizar</text>
<text x="491.5" y="107.8" fill="#10e010">Alkaid</text>
<text x="502.9" y="142.1" fill="#10e010">Asellus S</text>
<text x="512.2" y="149.9" fill="#10e010">Asellus</text>
<text x="236.1" y="238.5" fill="#10e010">Muscida</text>
<text x="356.3" y="228.8" fill="#10e010">Gianfar</text>
<text x="446.7" y="218.0" fill="#10e010">Thuban</text>
<text x="512.6" y="227.7" fill="#10e010">Ed Asich</text>
<text x="429.5" y="278.3" fill="#10e010">Kocab</text>
<text x="463.4" y="278.8" fill="#10e010">rkad</text>
<text x="458" y="296.4" fill="#10cccc">DRACO</text>
<text x="384.8" y="307.8" fill="#10cccc">URSA MINOR</text>
<text x="503.5" y="311.5" fill="#10e010">Aldhibah</text>
<text x="388.2" y="339.7" fill="#10e010">Yildun</text>
<text x="371" y="343.6" fill="#10e010">Polaris</text>
<text x="468" y="334.9" fill="#10e010">Gziban</text>
<text x="489.2" y="380.5" fill="#10e010">Alrais</text>
<text x="474" y="386.0" fill="#10e010">Alsafi</text>
<text x="468" y="391.8" fill="#10e010">Tyl</text>
<text x="392.6" y="397.0" fill="#10e010">Al Kalb al Rai</text>
<text x="377" y="408.0" fill="#10e010">Errai</text>
<text x="70.1" y="340.5" fill="#10e010">Menkalinan</text>
<text x="152.8" y="343.0" fill="#10e010">Prijipati</text>
<text x="196.9" y="378.7" fill="#10cccc">CAMELOPARDALIS</text>
<text x="87" y="393.3" fill="#10e010">Capella</text>
<text x="34.2" y="422.1" fill="#10e010">Hoedus IInz</text>
<text x="34.2" y="428.4" fill="#10e010">Hoedus I</text>
<text x="437" y="426.5" fill="#10e010">Alfirk</text>
<text x="473.4" y="460.6" fill="#10e010">Alderamin</text>
<text x="515.2" y="468.8" fill="#10e010">Çastula</text>
<text x="439.8" y="468.3" fill="#10e010">Kurhah</text>
<text x="416.8" y="482.0" fill="#10cccc">CEPHEUS</text>
<text x="474.2" y="494.0" fill="#10e010">Garnet Star</text>
<text x="508.9" y="542.6" fill="#10e010">Azelfafage</text>
<text x="298.7" y="473.7" fill="#10e010">Segin</text>
<text x="308.5" y="502.2" fill="#10e010">Ruchbah</text>
<text x="364.3" y="522.4" fill="#10e010">Caph</text>
<text x="330.4" y="527.7" fill="#10e010">Achird</text>
<text x="336.9" y="537.1" fill="#10e010">Shedir</text>
<text x="305.9" y="542.8" fill="#10e010">Marfak</text>
<text x="231.6" y="492.4" fill="#10e010">Miram</text>
<text x="174" y="500.1" fill="#10e010">Mirphak</text>
<text x="69.2" y="534.3" fill="#10cccc">PERSEUS</text>
<text x="8.5" y="553.2" fill="#10e010">Menkib</text>
<text x="115.8" y="578.5" fill="#10e010">Algol</text>
<text x="98.4" y="587.8" fill="#10e010">Gorgonea Quarta</text>
<text x="98.4" y="601.8" fill="#10e010">Gorgonea Tertiainda</text>
<text x="200.6" y="625.8" fill="#10e010">Almaak</text>
<text x="265.6" y="619.8" fill="#10e010">Adhil</text>
<text x="465.1" y="620.7" fill="#10cccc">LACERTA</text>
<polyline points="87.7,35.0 104.0,150.0 122.5,241.5 184.9,291.8" fill="none" stroke="#00e4ee" stroke-width="1.85" stroke-linejoin="round" stroke-linecap="round"/>
<polyline points="223.9,45.0 228.7,43.7" fill="none" stroke="#00e4ee" stroke-width="1.85" stroke-linejoin="round" stroke-linecap="round"/>
<polyline points="243.7,42.6 298.3,37.5" fill="none" stroke="#00e4ee" stroke-width="1.85" stroke-linejoin="round" stroke-linecap="round"/>
<polyline points="284.0,35.7 298.3,37.5" fill="none" stroke="#00e4ee" stroke-width="1.85" stroke-linejoin="round" stroke-linecap="round"/>
<polyline points="169.3,135.8 212.2,144.7" fill="none" stroke="#00e4ee" stroke-width="1.85" stroke-linejoin="round" stroke-linecap="round"/>
<polyline points="170.8,146.2 221.8,146.8" fill="none" stroke="#00e4ee" stroke-width="1.85" stroke-linejoin="round" stroke-linecap="round"/>
<polyline points="221.8,146.8 298.3,37.5" fill="none" stroke="#00e4ee" stroke-width="1.85" stroke-linejoin="round" stroke-linecap="round"/>
<polyline points="298.3,37.5 348.9,63.0 359.4,115.7 378.2,141.7 326.0,180.3 315.1,143.6 359.4,115.7" fill="none" stroke="#00e4ee" stroke-width="1.85" stroke-linejoin="round" stroke-linecap="round"/>
<polyline points="326.0,180.3 271.8,215.0 229.7,234.7 267.8,184.5 221.8,146.8" fill="none" stroke="#00e4ee" stroke-width="1.85" stroke-linejoin="round" stroke-linecap="round"/>
<polyline points="378.2,141.7 412.8,138.8 442.2,139.8 482.9,105.6" fill="none" stroke="#00e4ee" stroke-width="1.85" stroke-linejoin="round" stroke-linecap="round"/>
<polyline points="337.7,301.0 337.7,265.0 378.9,230.0" fill="none" stroke="#00e4ee" stroke-width="1.85" stroke-linejoin="round" stroke-linecap="round"/>
<polyline points="396.3,224.2 440.6,213.7 508.4,223.7 526.6,246.2 514.4,271.4 499.3,307.8 458.9,347.3 451.3,366.5 461.9,387.7 483.2,376.2 557.0,336.0" fill="none" stroke="#00e4ee" stroke-width="1.85" stroke-linejoin="round" stroke-linecap="round"/>
<polyline points="362.9,340.1 383.7,335.8 405.5,324.4 416.5,308.0" fill="none" stroke="#00e4ee" stroke-width="1.85" stroke-linejoin="round" stroke-linecap="round"/>
<polyline points="419.9,300.8 423.3,275.2 429.5,275.2" fill="none" stroke="#00e4ee" stroke-width="1.85" stroke-linejoin="round" stroke-linecap="round"/>
<polyline points="419.9,300.8 435.6,303.9 441.1,278.7" fill="none" stroke="#00e4ee" stroke-width="1.85" stroke-linejoin="round" stroke-linecap="round"/>
<polyline points="297.9,319.8 251.5,328.6 239.0,372.5" fill="none" stroke="#00e4ee" stroke-width="1.85" stroke-linejoin="round" stroke-linecap="round"/>
<polyline points="243.3,378.0 278.9,392.4 249.2,412.2" fill="none" stroke="#00e4ee" stroke-width="1.85" stroke-linejoin="round" stroke-linecap="round"/>
<polyline points="151.1,397.8 199.2,380.1 222.4,378.0" fill="none" stroke="#00e4ee" stroke-width="1.85" stroke-linejoin="round" stroke-linecap="round"/>
<polyline points="0.0,338.2 61.9,338.2 78.0,392.0 61.0,415.0" fill="none" stroke="#00e4ee" stroke-width="1.85" stroke-linejoin="round" stroke-linecap="round"/>
<polyline points="30.0,416.5 0.0,430.2" fill="none" stroke="#00e4ee" stroke-width="1.85" stroke-linejoin="round" stroke-linecap="round"/>
<polyline points="0.0,550.9 53.9,520.8 137.6,492.5 121.4,466.5" fill="none" stroke="#00e4ee" stroke-width="1.85" stroke-linejoin="round" stroke-linecap="round"/>
<polyline points="137.6,492.5 166.7,497.3 203.9,493.2 226.2,488.3" fill="none" stroke="#00e4ee" stroke-width="1.85" stroke-linejoin="round" stroke-linecap="round"/>
<polyline points="166.7,497.3 176.5,511.9 194.2,534.5" fill="none" stroke="#00e4ee" stroke-width="1.85" stroke-linejoin="round" stroke-linecap="round"/>
<polyline points="166.7,497.3 141.3,543.4 109.8,575.2 93.5,597.3 97.2,597.8" fill="none" stroke="#00e4ee" stroke-width="1.85" stroke-linejoin="round" stroke-linecap="round"/>
<polyline points="193.4,622.8 201.3,640.0" fill="none" stroke="#00e4ee" stroke-width="1.85" stroke-linejoin="round" stroke-linecap="round"/>
<polyline points="293.7,469.1 301.6,498.2 308.1,499.4" fill="none" stroke="#00e4ee" stroke-width="1.85" stroke-linejoin="round" stroke-linecap="round"/>
<polyline points="324.7,505.4 329.7,535.0 342.0,528.5" fill="none" stroke="#00e4ee" stroke-width="1.85" stroke-linejoin="round" stroke-linecap="round"/>
<polyline points="352.0,521.6 357.8,518.4" fill="none" stroke="#00e4ee" stroke-width="1.85" stroke-linejoin="round" stroke-linecap="round"/>
<polyline points="371.5,404.6 405.9,464.7 437.9,509.2 467.1,457.3 431.6,422.3 384.0,408.1" fill="none" stroke="#00e4ee" stroke-width="1.85" stroke-linejoin="round" stroke-linecap="round"/>
<polyline points="431.6,422.3 405.9,464.7" fill="none" stroke="#00e4ee" stroke-width="1.85" stroke-linejoin="round" stroke-linecap="round"/>
<polyline points="467.1,457.3 487.0,445.0 487.9,430.5" fill="none" stroke="#00e4ee" stroke-width="1.85" stroke-linejoin="round" stroke-linecap="round"/>
<polyline points="437.9,509.2 451.5,504.3" fill="none" stroke="#00e4ee" stroke-width="1.85" stroke-linejoin="round" stroke-linecap="round"/>
<polyline points="437.9,509.2 452.3,513.9" fill="none" stroke="#00e4ee" stroke-width="1.85" stroke-linejoin="round" stroke-linecap="round"/>
<polyline points="461.2,551.4 461.2,569.8 472.1,592.3 480.4,614.2 491.8,639.3" fill="none" stroke="#00e4ee" stroke-width="1.85" stroke-linejoin="round" stroke-linecap="round"/>
<circle cx="223.9" cy="45" r="1.3" fill="#e8ecff"/>
<circle cx="298.3" cy="37.5" r="1.2" fill="#ffffff"/>
<circle cx="221.8" cy="146.8" r="1.5" fill="#ffffff"/>
<circle cx="169.3" cy="135.8" r="1" fill="#ffffff"/>
<circle cx="170.8" cy="146.2" r="1" fill="#ffffff"/>
<circle cx="359.4" cy="115.7" r="1.6" fill="#e0e4ff"/>
<circle cx="315.1" cy="143.6" r="1.8" fill="#d8e0ff"/>
<circle cx="326" cy="180.3" r="2.4" fill="#fff0c8"/>
<circle cx="378.2" cy="141.7" r="1.2" fill="#ffffff"/>
<circle cx="412.8" cy="138.8" r="2.3" fill="#c8d8ff"/>
<circle cx="442.2" cy="139.8" r="1.6" fill="#ffffff"/>
<circle cx="482.9" cy="105.6" r="2.5" fill="#c8d8ff"/>
<circle cx="229.7" cy="234.7" r="1.5" fill="#ffe8c0"/>
<circle cx="351" cy="225" r="1.5" fill="#ffd090"/>
<circle cx="440.6" cy="213.7" r="1.3" fill="#ffffff"/>
<circle cx="514.4" cy="271.4" r="1.8" fill="#f4f4ff"/>
<circle cx="423.5" cy="274.8" r="1.8" fill="#ffd8a0"/>
<circle cx="499.3" cy="307.8" r="1.2" fill="#ffffff"/>
<circle cx="362.4" cy="340.4" r="3.0" fill="#fff8e8"/>
<circle cx="458.9" cy="347.3" r="1.2" fill="#fff0d0"/>
<circle cx="461.9" cy="387.7" r="1.5" fill="#ffe0c0"/>
<circle cx="483.2" cy="376.2" r="1.3" fill="#ffffff"/>
<circle cx="371.5" cy="404.6" r="1.5" fill="#fff0c0"/>
<circle cx="431.6" cy="422.3" r="1.5" fill="#ffffff"/>
<circle cx="467.1" cy="457.3" r="2.0" fill="#ffffff"/>
<circle cx="405.9" cy="464.7" r="1.2" fill="#ffe0a0"/>
<circle cx="437.9" cy="509.2" r="1.3" fill="#ffffff"/>
<circle cx="452.3" cy="504.3" r="1.2" fill="#ffd070"/>
<circle cx="61.9" cy="338.2" r="2.6" fill="#c8d4ff"/>
<circle cx="78" cy="392" r="3.8" fill="#fff0d0"/>
<circle cx="147" cy="339" r="1.3" fill="#fff0c8"/>
<circle cx="53.9" cy="520.8" r="1.6" fill="#c0b8ff"/>
<circle cx="166.7" cy="497.3" r="3.0" fill="#ffffff"/>
<circle cx="203.9" cy="493.2" r="2.0" fill="#ffffff"/>
<circle cx="109.8" cy="575.2" r="1.8" fill="#e8ecff"/>
<circle cx="93.5" cy="597.3" r="1.2" fill="#ffe0a0"/>
<circle cx="193.4" cy="622.8" r="1.8" fill="#ffe8a0"/>
<circle cx="293.7" cy="469.1" r="1.3" fill="#d0d8ff"/>
<circle cx="301.6" cy="498.2" r="2.0" fill="#f0f0ff"/>
<circle cx="329.7" cy="535" r="2.2" fill="#ffe0a0"/>
<circle cx="357.8" cy="518.4" r="2.5" fill="#ffffff"/>
<circle cx="461.2" cy="569.8" r="1.3" fill="#ffffff"/>
<circle cx="61" cy="415" r="1" fill="#ffffff"/>
<circle cx="30" cy="416.5" r="1.3" fill="#d0d8ff"/>
<circle cx="126.3" cy="97.5" r="1.2" fill="#ffffff"/>
<circle cx="90.8" cy="520.1" r="1.1" fill="#ffffff"/>
<circle cx="205.3" cy="504.4" r="1.1" fill="#ffffff"/></g></svg>
<div style="position:absolute;left:0.0px;top:640.0px;width:561.0px;height:17.0px;background:#ececec;"></div>
<div style="position:absolute;left:0.0px;top:640.5px;width:205.5px;height:16.5px;border-top:1px solid #9a9a9a;border-left:1px solid #9a9a9a;border-right:1px solid #fff;box-sizing:border-box;"></div>
<div style="position:absolute;left:206.5px;top:640.5px;width:354.5px;height:16.5px;border-top:1px solid #9a9a9a;border-left:1px solid #9a9a9a;box-sizing:border-box;"></div>
<div class="t" style="left:1.6px;top:644.13px;font-size:8.83px;color:#000;-webkit-text-stroke:0.12px #000;">Direction: RA: 0h 0m 0.00s&nbsp; DE: +90° 0' 0.00"</div>
<div class="t" style="left:207.6px;top:644.15px;font-size:8.8px;color:#000;-webkit-text-stroke:0.12px #000;">Position: RA: 0h 0m 0.00s&nbsp; DE: &nbsp;0° 0' 0.00"&nbsp; DFTS: 0.00 pc (0.00 ly)</div>
<div style="position:absolute;left:728.5px;top:0.0px;width:3.5px;height:659.0px;background:linear-gradient(90deg,#c8c8c8 0%,#dcdcdc 50%,#a8a8a8 100%);"></div>
<div style="position:absolute;left:0.0px;top:657.0px;width:732.0px;height:2.0px;background:#a0a0a0;"></div>
<div style="position:absolute;left:557.0px;top:31.0px;width:171.0px;height:428.5px;background:#202020;border-radius:6px 6px 0 0;"></div>
<div style="position:absolute;left:558.0px;top:32.0px;width:169.0px;height:17.5px;background:linear-gradient(90deg,#3a3a3a 0%,#454545 20%,#383838 35%,#4a4a4a 55%,#3c3c3c 75%,#333 100%);border-radius:5px 5px 0 0;"></div>
<div style="position:absolute;left:559.5px;top:49.5px;width:165.7px;height:407.0px;background:#ececec;"></div>
<div class="t" style="left:562.5px;top:37.11px;font-size:8.85px;color:#d8d8d8;">Panneau de contrôle</div>
<div style="position:absolute;left:701.6px;top:34.6px;width:20.0px;height:12.3px;background:#3a3a3a;border:1px solid #6a6a6a;border-radius:2px;box-sizing:border-box;box-shadow:inset 0 0 0 1px #2a2a2a;"></div>
<svg style="position:absolute;left:707.6px;top:37.2px" width="8" height="7" viewBox="0 0 8 7"><path d="M1 0.8 L7 6.2 M7 0.8 L1 6.2" stroke="#f0f0f0" stroke-width="1.7"/></svg>
<div style="position:absolute;left:562.0px;top:55.0px;width:160.0px;height:84.6px;border:1px solid #c4c4c4;box-shadow:inset 1px 1px 0 #fcfcfc, 1px 1px 0 #fcfcfc;box-sizing:border-box;"></div>
<div class="t" style="left:566.5px;top:51.27px;font-size:8.9px;color:#000;background:#ececec;-webkit-text-stroke:0.12px #000;padding:0 1px;">Filtrage</div>
<div class="cb" style="left:568.3px;top:64.2px;width:8px;height:8px"><svg width="10" height="10" viewBox="0 0 10 10" style="position:absolute;left:0;top:0"><path d="M2.2 4.6 L4 6.6 L7.8 2.4" stroke="#000" stroke-width="1.6" fill="none"/></svg></div>
<div class="t" style="left:582.0px;top:65.15px;font-size:7.5px;color:#000;-webkit-text-stroke:0.18px #000;letter-spacing:0.12px;">Magnitude limite visuelle</div>
<div class="t" style="right:66.6px;top:75.35px;font-size:7.5px;color:#000;-webkit-text-stroke:0.18px #000;letter-spacing:0.12px;">(depuis le Soleil):</div>
<div style="position:absolute;left:666.6px;top:66.0px;width:50.0px;height:17.0px;background:#fff;border-top:2px solid #7c7c7c;border-left:2px solid #7c7c7c;border-bottom:1px solid #f4f4f4;border-right:1px solid #f4f4f4;box-sizing:border-box;"></div>
<div class="t" style="left:668.6px;top:70.67px;font-size:8.9px;color:#000;-webkit-text-stroke:0.12px #000;">6.00</div>
<div class="cb" style="left:568.3px;top:90.0px;width:8px;height:8px"></div>
<div class="t" style="left:582.4px;top:90.95px;font-size:7.5px;color:#000;-webkit-text-stroke:0.18px #000;letter-spacing:0.12px;">Distance limite</div>
<div class="t" style="left:584.4px;top:101.95px;font-size:7.5px;color:#000;-webkit-text-stroke:0.18px #000;letter-spacing:0.12px;">Soleil en Parsecs:</div>
<div style="position:absolute;left:666.6px;top:92.5px;width:50.0px;height:16.1px;background:#fff;border-top:2px solid #7c7c7c;border-left:2px solid #7c7c7c;border-bottom:1px solid #f4f4f4;border-right:1px solid #f4f4f4;box-sizing:border-box;"></div>
<div class="t" style="left:668.6px;top:96.72px;font-size:8.9px;color:#000;-webkit-text-stroke:0.12px #000;">1000.00</div>
<div class="cb" style="left:568.3px;top:122.0px;width:8px;height:8px"></div>
<div class="t" style="left:582.4px;top:122.85px;font-size:7.5px;color:#000;-webkit-text-stroke:0.18px #000;letter-spacing:0.12px;">Utiliser options avancés:</div>
<div style="position:absolute;left:667.0px;top:119.7px;width:50.6px;height:12.9px;background:#ececec;border-top:1px solid #fdfdfd;border-left:1px solid #fdfdfd;border-bottom:2px solid #6e6e6e;border-right:2px solid #6e6e6e;box-sizing:border-box;"></div>
<div class="t" style="left:667.0px;width:50.6px;text-align:center;top:121.82px;font-size:8.9px">Modifier...</div>
<div style="position:absolute;left:562.0px;top:150.4px;width:160.0px;height:141.6px;border:1px solid #c4c4c4;box-shadow:inset 1px 1px 0 #fcfcfc, 1px 1px 0 #fcfcfc;box-sizing:border-box;"></div>
<div class="t" style="left:566.5px;top:146.07px;font-size:8.9px;color:#000;background:#ececec;-webkit-text-stroke:0.12px #000;padding:0 1px;">Détails écran</div>
<div class="cb" style="left:568.3px;top:160.0px;width:8px;height:8px"><svg width="10" height="10" viewBox="0 0 10 10" style="position:absolute;left:0;top:0"><path d="M2.2 4.6 L4 6.6 L7.8 2.4" stroke="#000" stroke-width="1.6" fill="none"/></svg></div>
<div class="t" style="left:582.4px;top:160.47px;font-size:8.9px;color:#000;-webkit-text-stroke:0.12px #000;">Marque position Soleil</div>
<div class="cb" style="left:568.3px;top:173.3px;width:8px;height:8px"><svg width="10" height="10" viewBox="0 0 10 10" style="position:absolute;left:0;top:0"><path d="M2.2 4.6 L4 6.6 L7.8 2.4" stroke="#000" stroke-width="1.6" fill="none"/></svg></div>
<div class="t" style="left:582.4px;top:173.47px;font-size:8.9px;color:#000;-webkit-text-stroke:0.12px #000;">Noms des étoiles connues</div>
<div class="cb" style="left:568.3px;top:185.8px;width:8px;height:8px"></div>
<div class="t" style="left:582.4px;top:186.17px;font-size:8.9px;color:#000;-webkit-text-stroke:0.12px #000;">Détails pour chaque étoile:</div>
<div class="cb" style="left:582.0px;top:199.7px;width:8px;height:8px"><svg width="10" height="10" viewBox="0 0 10 10" style="position:absolute;left:0;top:0"><path d="M2.2 4.6 L4 6.6 L7.8 2.4" stroke="#000" stroke-width="1.6" fill="none"/></svg></div>
<div class="t" style="left:595.7px;top:200.05px;font-size:7.5px;color:#000;-webkit-text-stroke:0.18px #000;letter-spacing:0.12px;">Identifiant Catalogue</div>
<div class="cb" style="left:582.0px;top:212.4px;width:8px;height:8px"><svg width="10" height="10" viewBox="0 0 10 10" style="position:absolute;left:0;top:0"><path d="M2.2 4.6 L4 6.6 L7.8 2.4" stroke="#000" stroke-width="1.6" fill="none"/></svg></div>
<div class="t" style="left:595.7px;top:213.35px;font-size:7.5px;color:#000;-webkit-text-stroke:0.18px #000;letter-spacing:0.12px;">Ascension droite et déclinaison</div>
<div class="cb" style="left:582.0px;top:225.6px;width:8px;height:8px"><svg width="10" height="10" viewBox="0 0 10 10" style="position:absolute;left:0;top:0"><path d="M2.2 4.6 L4 6.6 L7.8 2.4" stroke="#000" stroke-width="1.6" fill="none"/></svg></div>
<div class="t" style="left:595.7px;top:226.75px;font-size:7.5px;color:#000;-webkit-text-stroke:0.18px #000;letter-spacing:0.12px;">Apparent</div>
<div class="cb" style="left:628.0px;top:225.6px;width:8px;height:8px"><svg width="10" height="10" viewBox="0 0 10 10" style="position:absolute;left:0;top:0"><path d="M2.2 4.6 L4 6.6 L7.8 2.4" stroke="#000" stroke-width="1.6" fill="none"/></svg></div>
<div class="t" style="left:641.4px;top:226.75px;font-size:7.5px;color:#000;-webkit-text-stroke:0.18px #000;letter-spacing:0.12px;">Magnitude absolue</div>
<div class="cb" style="left:582.0px;top:238.9px;width:8px;height:8px"><svg width="10" height="10" viewBox="0 0 10 10" style="position:absolute;left:0;top:0"><path d="M2.2 4.6 L4 6.6 L7.8 2.4" stroke="#000" stroke-width="1.6" fill="none"/></svg></div>
<div class="t" style="left:595.7px;top:239.95px;font-size:7.5px;color:#000;-webkit-text-stroke:0.18px #000;letter-spacing:0.12px;">Parallax</div>
<div class="cb" style="left:628.0px;top:238.9px;width:8px;height:8px"><svg width="10" height="10" viewBox="0 0 10 10" style="position:absolute;left:0;top:0"><path d="M2.2 4.6 L4 6.6 L7.8 2.4" stroke="#000" stroke-width="1.6" fill="none"/></svg></div>
<div class="t" style="left:641.4px;top:239.95px;font-size:7.5px;color:#000;-webkit-text-stroke:0.18px #000;letter-spacing:0.12px;">Distance au Soleil</div>
<div class="cb" style="left:582.0px;top:252.0px;width:8px;height:8px"><svg width="10" height="10" viewBox="0 0 10 10" style="position:absolute;left:0;top:0"><path d="M2.2 4.6 L4 6.6 L7.8 2.4" stroke="#000" stroke-width="1.6" fill="none"/></svg></div>
<div class="t" style="left:595.7px;top:252.45px;font-size:7.5px;color:#000;-webkit-text-stroke:0.18px #000;letter-spacing:0.12px;">B - V</div>
<div class="cb" style="left:628.0px;top:252.0px;width:8px;height:8px"><svg width="10" height="10" viewBox="0 0 10 10" style="position:absolute;left:0;top:0"><path d="M2.2 4.6 L4 6.6 L7.8 2.4" stroke="#000" stroke-width="1.6" fill="none"/></svg></div>
<div class="t" style="left:641.4px;top:252.45px;font-size:7.5px;color:#000;-webkit-text-stroke:0.18px #000;letter-spacing:0.12px;">Température réelle</div>
<div class="cb" style="left:568.3px;top:268.9px;width:8px;height:8px"></div>
<div class="t" style="left:582.4px;top:268.57px;font-size:8.9px;color:#000;-webkit-text-stroke:0.12px #000;">Marquer extension Voie Lactée</div>
<div class="t" style="left:582.4px;top:278.97px;font-size:8.9px;color:#000;-webkit-text-stroke:0.12px #000;">Galaxies en fil de fer</div>
<div style="position:absolute;left:562.0px;top:301.5px;width:160.0px;height:67.5px;border:1px solid #c4c4c4;box-shadow:inset 1px 1px 0 #fcfcfc, 1px 1px 0 #fcfcfc;box-sizing:border-box;"></div>
<div class="t" style="left:566.5px;top:296.87px;font-size:8.9px;color:#000;background:#ececec;-webkit-text-stroke:0.12px #000;padding:0 1px;">Définir taille des points pour étoiles</div>
<svg style="position:absolute;left:569.0px;top:311.6px" width="10" height="10" viewBox="0 0 10 10"><circle cx="5" cy="5" r="4.1" fill="#fff" stroke="#b4b4b4" stroke-width="0.9"/><path d="M7.6 2.4 A3.6 3.6 0 0 0 2.4 7.6" stroke="#7a7a7a" stroke-width="0.9" fill="none"/></svg>
<div class="t" style="left:582.0px;top:312.05px;font-size:7.5px;color:#000;-webkit-text-stroke:0.18px #000;letter-spacing:0.12px;">Même taille pour tout:</div>
<div style="position:absolute;left:692.6px;top:308.8px;width:25.0px;height:14.4px;background:#fff;border-top:2px solid #7c7c7c;border-left:2px solid #7c7c7c;border-bottom:1px solid #f4f4f4;border-right:1px solid #f4f4f4;box-sizing:border-box;"></div>
<div class="t" style="left:695.0px;top:313.85px;font-size:7.5px;color:#000;-webkit-text-stroke:0.18px #000;letter-spacing:0.12px;">6</div>
<div style="position:absolute;left:704.5px;top:310.8px;width:12.1px;height:11.4px;background:#ececec;border-top:1px solid #fff;border-left:1px solid #fff;border-bottom:1px solid #505050;border-right:1px solid #505050;box-sizing:border-box;"></div>
<svg style="position:absolute;left:707px;top:314px" width="7" height="5" viewBox="0 0 7 5"><path d="M0 0 L7 0 L3.5 4.5 Z" fill="#000"/></svg>
<svg style="position:absolute;left:569.0px;top:326.0px" width="10" height="10" viewBox="0 0 10 10"><circle cx="5" cy="5" r="4.1" fill="#fff" stroke="#b4b4b4" stroke-width="0.9"/><path d="M7.6 2.4 A3.6 3.6 0 0 0 2.4 7.6" stroke="#7a7a7a" stroke-width="0.9" fill="none"/><circle cx="5" cy="5" r="1.5" fill="#000"/></svg>
<div class="t" style="left:582.0px;top:327.15px;font-size:7.5px;color:#000;-webkit-text-stroke:0.18px #000;letter-spacing:0.12px;">Par magnitude apparente depuis le Sol</div>
<svg style="position:absolute;left:569.0px;top:340.9px" width="10" height="10" viewBox="0 0 10 10"><circle cx="5" cy="5" r="4.1" fill="#fff" stroke="#b4b4b4" stroke-width="0.9"/><path d="M7.6 2.4 A3.6 3.6 0 0 0 2.4 7.6" stroke="#7a7a7a" stroke-width="0.9" fill="none"/></svg>
<div class="t" style="left:582.0px;top:342.05px;font-size:7.5px;color:#000;-webkit-text-stroke:0.18px #000;letter-spacing:0.12px;">Par magnitude absolue</div>
<svg style="position:absolute;left:569.0px;top:355.3px" width="10" height="10" viewBox="0 0 10 10"><circle cx="5" cy="5" r="4.1" fill="#fff" stroke="#b4b4b4" stroke-width="0.9"/><path d="M7.6 2.4 A3.6 3.6 0 0 0 2.4 7.6" stroke="#7a7a7a" stroke-width="0.9" fill="none"/></svg>
<div class="t" style="left:582.0px;top:356.45px;font-size:7.5px;color:#000;width:139.5px;overflow:hidden;-webkit-text-stroke:0.18px #000;letter-spacing:0.12px;">Par magnitude apparente depuis la positi</div>
<div style="position:absolute;left:562.0px;top:379.4px;width:160.0px;height:52.4px;border:1px solid #c4c4c4;box-shadow:inset 1px 1px 0 #fcfcfc, 1px 1px 0 #fcfcfc;box-sizing:border-box;"></div>
<div class="t" style="left:566.5px;top:374.77px;font-size:8.9px;color:#000;background:#ececec;-webkit-text-stroke:0.12px #000;padding:0 1px;">Angle champ de vision</div>
<div class="t" style="left:568.0px;top:386.37px;font-size:8.9px;color:#000;-webkit-text-stroke:0.12px #000;">Angle champ en degrés:</div>
<div style="position:absolute;left:677.0px;top:382.3px;width:39.0px;height:16.4px;background:#fff;border-top:2px solid #7c7c7c;border-left:2px solid #7c7c7c;border-bottom:1px solid #f4f4f4;border-right:1px solid #f4f4f4;box-sizing:border-box;"></div>
<div class="t" style="left:679.0px;top:386.67px;font-size:8.9px;color:#000;-webkit-text-stroke:0.12px #000;">90.00</div>
<div style="position:absolute;left:565.6px;top:401.0px;width:152.7px;height:30.0px;border-top:1px solid #a0a0a0;border-left:1px solid #a0a0a0;border-bottom:1px solid #fff;border-right:1px solid #fff;box-sizing:border-box;"></div>
<div style="position:absolute;left:571.0px;top:407.3px;width:140.0px;height:2.7px;border-top:1px solid #8a8a8a;border-left:1px solid #8a8a8a;border-bottom:1px solid #fff;border-right:1px solid #fff;box-sizing:border-box;background:#e0e0e0;"></div>
<svg style="position:absolute;left:680.5px;top:404px" width="6" height="9" viewBox="0 0 6 9"><path d="M1 0.5 L4.5 0.5 L4.5 6 L2.8 8.5 L1 6 Z" fill="#ececec" stroke="#505050" stroke-width="0.8"/></svg>
<div style="position:absolute;left:571.8px;top:415.0px;width:1.0px;height:2.5px;background:#000;"></div>
<div class="t" style="left:560.5px;width:30px;text-align:center;top:419.04px;font-size:6.8px">0.01°</div>
<div style="position:absolute;left:600.0px;top:415.0px;width:1.0px;height:2.5px;background:#000;"></div>
<div class="t" style="left:585.5px;width:30px;text-align:center;top:419.04px;font-size:6.8px">0.1°</div>
<div style="position:absolute;left:628.1px;top:415.0px;width:1.0px;height:2.5px;background:#000;"></div>
<div class="t" style="left:613.6px;width:30px;text-align:center;top:419.04px;font-size:6.8px">1°</div>
<div style="position:absolute;left:656.0px;top:415.0px;width:1.0px;height:2.5px;background:#000;"></div>
<div class="t" style="left:641.5px;width:30px;text-align:center;top:419.04px;font-size:6.8px">10°</div>
<div style="position:absolute;left:684.9px;top:415.0px;width:1.0px;height:2.5px;background:#000;"></div>
<div class="t" style="left:670.4px;width:30px;text-align:center;top:419.04px;font-size:6.8px">100°</div>
<div style="position:absolute;left:709.4px;top:415.0px;width:1.0px;height:2.5px;background:#000;"></div>
<div class="t" style="left:694.9px;width:30px;text-align:center;top:419.04px;font-size:6.8px">180°</div>
<div style="position:absolute;left:562.0px;top:437.1px;width:65.7px;height:16.4px;background:#ececec;border-top:1px solid #fdfdfd;border-left:1px solid #fdfdfd;border-bottom:2px solid #6e6e6e;border-right:2px solid #6e6e6e;box-sizing:border-box;"></div>
<div class="t" style="left:562.0px;width:65.7px;text-align:center;top:440.97px;font-size:8.9px">Rafraîchir</div>
<div style="position:absolute;left:631.0px;top:437.1px;width:90.9px;height:16.4px;background:#ececec;border-top:1px solid #fdfdfd;border-left:1px solid #fdfdfd;border-bottom:2px solid #6e6e6e;border-right:2px solid #6e6e6e;box-sizing:border-box;"></div>
<div class="t" style="left:631.0px;width:90.9px;text-align:center;top:440.97px;font-size:8.9px">Réglages par défaut</div>
<div style="position:absolute;left:561.0px;top:460.5px;width:167.5px;height:196.5px;background:#202020;border-radius:6px 6px 0 0;"></div>
<div style="position:absolute;left:562.0px;top:461.5px;width:165.5px;height:17.5px;background:linear-gradient(90deg,#3a3a3a 0%,#454545 20%,#383838 35%,#4a4a4a 55%,#3c3c3c 75%,#333 100%);border-radius:5px 5px 0 0;"></div>
<div style="position:absolute;left:563.5px;top:479.0px;width:162.2px;height:175.0px;background:#ececec;"></div>
<div class="t" style="left:566.4px;top:466.21px;font-size:8.85px;color:#d8d8d8;">Contrôles Astro-Fly</div>
<div style="position:absolute;left:705.0px;top:464.0px;width:20.5px;height:11.3px;background:#3a3a3a;border:1px solid #6a6a6a;border-radius:2px;box-sizing:border-box;box-shadow:inset 0 0 0 1px #2a2a2a;"></div>
<svg style="position:absolute;left:711.2px;top:466.1px" width="8" height="7" viewBox="0 0 8 7"><path d="M1 0.8 L7 6.2 M7 0.8 L1 6.2" stroke="#f0f0f0" stroke-width="1.7"/></svg>
<div style="position:absolute;left:566.0px;top:484.0px;width:159.5px;height:79.4px;border:1px solid #c4c4c4;box-shadow:inset 1px 1px 0 #fcfcfc, 1px 1px 0 #fcfcfc;box-sizing:border-box;"></div>
<div class="t" style="left:570.0px;top:478.87px;font-size:8.9px;color:#000;background:#ececec;-webkit-text-stroke:0.12px #000;padding:0 1px;">Destination</div>
<div class="t" style="left:572.3px;top:494.02px;font-size:8.6px;color:#000;-webkit-text-stroke:0.12px #000;">AD en Degrés:</div>
<div class="t" style="left:651.0px;top:494.02px;font-size:8.6px;color:#000;-webkit-text-stroke:0.12px #000;">DEC en Degrés:</div>
<div style="position:absolute;left:571.6px;top:504.9px;width:68.6px;height:16.1px;background:#fff;border-top:2px solid #7c7c7c;border-left:2px solid #7c7c7c;border-bottom:1px solid #f4f4f4;border-right:1px solid #f4f4f4;box-sizing:border-box;"></div>
<div class="t" style="left:573.6px;top:509.27px;font-size:8.6px;color:#000;-webkit-text-stroke:0.12px #000;">0.00000000</div>
<div style="position:absolute;left:649.8px;top:504.9px;width:68.5px;height:16.1px;background:#fff;border-top:2px solid #7c7c7c;border-left:2px solid #7c7c7c;border-bottom:1px solid #f4f4f4;border-right:1px solid #f4f4f4;box-sizing:border-box;"></div>
<div class="t" style="left:651.8px;top:509.27px;font-size:8.6px;color:#000;-webkit-text-stroke:0.12px #000;">0.00000000</div>
<div class="t" style="left:572.3px;top:528.12px;font-size:8.6px;color:#000;-webkit-text-stroke:0.12px #000;">DFTS en Parsecs:</div>
<div style="position:absolute;left:571.6px;top:539.3px;width:68.6px;height:16.1px;background:#fff;border-top:2px solid #7c7c7c;border-left:2px solid #7c7c7c;border-bottom:1px solid #f4f4f4;border-right:1px solid #f4f4f4;box-sizing:border-box;"></div>
<div class="t" style="left:573.6px;top:543.67px;font-size:8.6px;color:#000;-webkit-text-stroke:0.12px #000;">0.00</div>
<div style="position:absolute;left:651.0px;top:539.3px;width:69.0px;height:16.1px;background:#ececec;border-top:1px solid #fdfdfd;border-left:1px solid #fdfdfd;border-bottom:2px solid #6e6e6e;border-right:2px solid #6e6e6e;box-sizing:border-box;"></div>
<div class="t" style="left:651.0px;width:69.0px;text-align:center;top:543.17px;font-size:8.6px">Naviguer vers</div>
<div style="position:absolute;left:566.0px;top:572.3px;width:159.5px;height:60.1px;border:1px solid #c4c4c4;box-shadow:inset 1px 1px 0 #fcfcfc, 1px 1px 0 #fcfcfc;box-sizing:border-box;"></div>
<div class="t" style="left:569.9px;top:567.87px;font-size:8.9px;color:#000;background:#ececec;-webkit-text-stroke:0.12px #000;padding:0 1px;">Paramètres mouvement</div>
<div class="t" style="left:570.9px;top:581.17px;font-size:8.9px;color:#000;-webkit-text-stroke:0.12px #000;">Facteur de vitesse en</div>
<div class="t" style="left:570.9px;top:593.17px;font-size:8.9px;color:#000;-webkit-text-stroke:0.12px #000;">translation:</div>
<div style="position:absolute;left:667.0px;top:582.0px;width:52.5px;height:16.3px;background:#fff;border-top:2px solid #7c7c7c;border-left:2px solid #7c7c7c;border-bottom:1px solid #f4f4f4;border-right:1px solid #f4f4f4;box-sizing:border-box;"></div>
<div class="t" style="left:669.0px;top:586.32px;font-size:8.9px;color:#000;-webkit-text-stroke:0.12px #000;">1.00</div>
<div class="t" style="left:570.9px;top:608.07px;font-size:8.9px;color:#000;-webkit-text-stroke:0.12px #000;">Rayon mouvement</div>
<div class="t" style="left:574.0px;top:619.17px;font-size:8.9px;color:#000;-webkit-text-stroke:0.12px #000;">orbital en Parsecs:</div>
<div style="position:absolute;left:667.0px;top:608.4px;width:52.5px;height:16.3px;background:#fff;border-top:2px solid #7c7c7c;border-left:2px solid #7c7c7c;border-bottom:1px solid #f4f4f4;border-right:1px solid #f4f4f4;box-sizing:border-box;"></div>
<div class="t" style="left:669.0px;top:612.72px;font-size:8.9px;color:#000;-webkit-text-stroke:0.12px #000;">10</div>
<div style="position:absolute;left:565.6px;top:636.3px;width:64.9px;height:16.1px;background:#ececec;border-top:1px solid #fdfdfd;border-left:1px solid #fdfdfd;border-bottom:2px solid #6e6e6e;border-right:2px solid #6e6e6e;box-sizing:border-box;"></div>
<div class="t" style="left:565.6px;width:64.9px;text-align:center;top:640.02px;font-size:8.9px">Retour origine</div>
<div style="position:absolute;left:634.1px;top:636.3px;width:91.4px;height:16.1px;background:#ececec;border-top:1px solid #fdfdfd;border-left:1px solid #fdfdfd;border-bottom:2px solid #6e6e6e;border-right:2px solid #6e6e6e;box-sizing:border-box;"></div>
<div class="t" style="left:634.1px;width:91.4px;text-align:center;top:640.02px;font-size:8.9px">Réglages par défaut</div>
</body></html>
